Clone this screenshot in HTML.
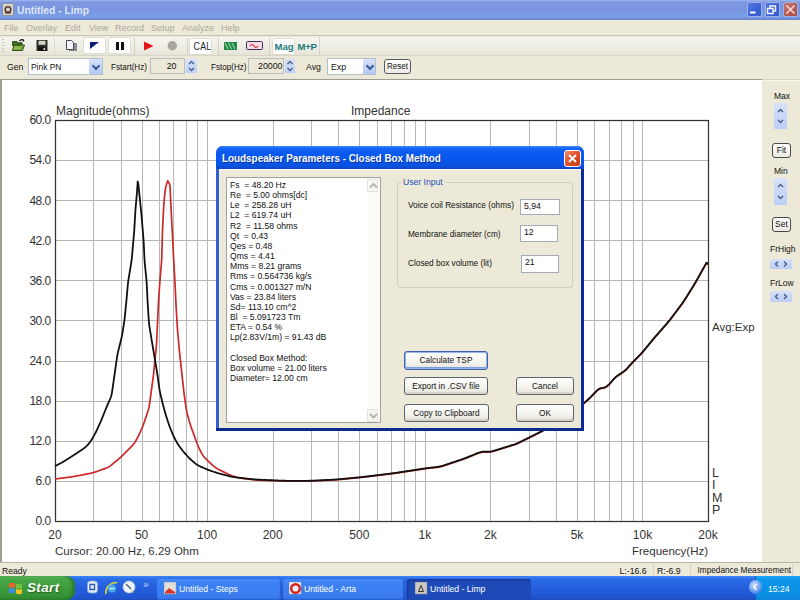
<!DOCTYPE html>
<html><head><meta charset="utf-8">
<style>
*{margin:0;padding:0;box-sizing:border-box}
html,body{width:800px;height:600px;overflow:hidden;background:#ece9d8;font-family:"Liberation Sans",sans-serif;font-size:11px;color:#000}
.a{position:absolute}
.t{position:absolute;white-space:nowrap;line-height:1}
#title{left:0;top:0;width:800px;height:20px;background:linear-gradient(#a0b8f0 0,#7d98e0 2px,#7a94df 10px,#7aa2ea 17px,#6d86cf 19px)}
#menu{left:0;top:20px;width:800px;height:16px;background:#ece9d8;border-bottom:1px solid #c8c5b6}
#menu span{position:absolute;top:3px;color:#aca899;font-size:9px}
#tb{left:0;top:37px;width:800px;height:19px;background:linear-gradient(#f5f4ee,#eeede4 60%,#e6e4d8);border-bottom:1px solid #d8d5c6}
#row2{left:0;top:56px;width:800px;height:24px;background:#ece9d8;border-bottom:1px solid #d6d3c4}
#chart{left:0;top:79px;width:762px;height:483px;background:#fff;border-left:2px solid #a09f98;border-top:1px solid #9c9b94}
#side{left:762px;top:80px;width:38px;height:482px;background:#ece9d8;border-top:1px solid #f6f5ee}
#status{left:0;top:562px;width:800px;height:14px;background:#ece9d8;border-top:1px solid #b8b5a6}
#task{left:0;top:576px;width:800px;height:24px;background:linear-gradient(#3d85f5 0,#2b6de8 3px,#245ddb 12px,#2157d4 20px,#1d4cc0 24px)}
#dlg{left:216px;top:146px;width:368px;height:285px;background:linear-gradient(90deg,#3a62d4 0,#2a56d0 3px,#0831d9 4px,#0831d9 364px,#0a2a9a 365px);border-radius:7px 7px 0 0}
.dl{font-size:8.6px;white-space:pre;color:#111}
.btn{border:1px solid #003c74;border-radius:3px;background:linear-gradient(#fefefd,#f4f3ee 60%,#e6e3d6);text-align:center;font-size:8.3px;color:#111;white-space:nowrap}
.tbb{top:2px;width:15px;height:15px;border:1px solid #9cb0ea;border-radius:2px;background:linear-gradient(135deg,#5478e0,#3c60d4 60%,#3558c8)}
.sm{font-size:8.5px;color:#111}
#st .sm{font-size:8.2px}
.combo{border:1px solid #b4bfce;background:#fff}
.ddb{background:linear-gradient(#d6e2fb,#b4c8f4);border-radius:1px}
.ddb::after{content:"";position:absolute;left:3.5px;top:4px;width:4px;height:4px;border-right:2px solid #3a5a9a;border-bottom:2px solid #3a5a9a;transform:rotate(45deg)}
.spin{background:linear-gradient(#d6e2fb,#bccdf6);border-radius:1px}
.sbtn{border:1px solid #4a4a4a;border-radius:3px;background:linear-gradient(#fff,#eceae2);font-size:8.5px;text-align:center;line-height:13px;color:#111}
.tbtn{height:21px;border-radius:3px;background:linear-gradient(#4a8cf6 0,#3c81f3 4px,#3a7cf0 16px,#3474e8 21px);box-shadow:inset -1px -1px 1px #2a60d0}
.tk{font-size:8.6px;color:#fff}
svg text{font-family:"Liberation Sans",sans-serif;font-size:12px;fill:#333}
</style></head><body>
<div id="title" class="a"></div>
<div class="a" style="left:2px;top:3px;width:12px;height:13px;background:#d8d4cc;border:1px solid #8a90a8"></div>
<svg class="a" style="left:2px;top:3px" width="12" height="13"><circle cx="6" cy="6.5" r="2.8" fill="none" stroke="#5a3030" stroke-width="1.5"/><path d="M3 10h6" stroke="#5a3030" stroke-width="1.2"/></svg>
<div class="t" style="left:17px;top:5.8px;color:#dde6f8;font-weight:bold;font-size:10.3px">Untitled - Limp</div>
<div class="a tbb" style="left:747px"></div><div class="a tbb" style="left:765px"></div><div class="a tbb" style="left:783px;background:linear-gradient(135deg,#c8766e,#b45a54 60%,#a64c48)"></div>
<svg class="a" style="left:747px;top:2px" width="51" height="15"><path d="M3 10.5h5.5" stroke="#fff" stroke-width="2"/><path d="M20.5 6.5h5.5v5h-5.5zM23 6V4h5.5v5h-2.5" stroke="#f4f6ff" stroke-width="1.4" fill="none"/><path d="M39.5 3.5L47.5 11.5M47.5 3.5L39.5 11.5" stroke="#f6d8d8" stroke-width="1.6"/></svg>
<div id="menu" class="a">
<span style="left:4px">File</span><span style="left:26px">Overlay</span><span style="left:65px">Edit</span><span style="left:89px">View</span><span style="left:115px">Record</span><span style="left:151px">Setup</span><span style="left:182px">Analyze</span><span style="left:221px">Help</span>
</div>
<div id="tb" class="a"></div>
<div class="a" style="left:2px;top:39px;width:2px;height:15px;background:repeating-linear-gradient(#c2bfae 0,#c2bfae 1px,transparent 1px,transparent 3px)"></div>
<svg class="a" style="left:0;top:36px" width="330" height="20">
<!-- open folder -->
<path d="M12.5 5.5h4.5l1 1.2h4v3h-9.5z" fill="#3f6e22" stroke="#1e3a10" stroke-width="0.8"/>
<path d="M12.5 14.5l1.5-5.5h10.5l-2 5.5z" fill="#78aa3a" stroke="#22400f" stroke-width="0.9"/>
<path d="M14 12h6" stroke="#a8d070" stroke-width="1"/>
<path d="M19.5 5q2-2.5 4.5-0.5" stroke="#111" stroke-width="1.3" fill="none"/><path d="M23 3.5l1.5 1.5l-2 0.8z" fill="#111"/>
<!-- save -->
<rect x="36.5" y="4" width="11" height="11" rx="0.5" fill="#2c2c24"/><rect x="38.5" y="4.8" width="7" height="4" fill="#d4d2c4"/><rect x="38.5" y="11" width="7" height="4" fill="#111"/><rect x="43.5" y="12" width="1.5" height="2" fill="#e0e0e0"/>
<path d="M54.5 2v17" stroke="#dcd8c8"/>
<!-- copy -->
<rect x="69" y="7" width="8" height="8" fill="#8a8a96"/><path d="M66.5 4.5h5l2 2v7h-7z" fill="#f4f2fa" stroke="#4a4a5a"/>
<!-- buttons white -->
<rect x="83.5" y="1.5" width="22" height="16" rx="2" fill="#fff" stroke="#e0ddd0"/>
<path d="M90 6h9l-9 7z" fill="#0a1f80"/>
<rect x="108.5" y="1.5" width="22" height="16" rx="2" fill="#fff" stroke="#e0ddd0"/>
<rect x="116" y="6" width="3" height="8" fill="#111"/><rect x="121" y="6" width="3" height="8" fill="#111"/>
<path d="M134.5 2v17" stroke="#d4d0c0"/>
<path d="M144 5.5l9.5 4.5l-9.5 4.5z" fill="#e8141a"/>
<circle cx="172.3" cy="9.8" r="4.7" fill="#a8a69e"/>
<path d="M187.5 2v17" stroke="#d4d0c0"/>
<rect x="189.5" y="2.5" width="22" height="16" rx="2" fill="#fff" stroke="#e0ddd0"/>
<text x="193.6" y="14.3" transform="translate(0 -2.9) scale(1 1.2)" style="font-size:8.8px;fill:#222;letter-spacing:0.2px">CAL</text>
<path d="M218.5 2v17" stroke="#d4d0c0"/>
<!-- green stripes -->
<rect x="224" y="6" width="13" height="8" fill="#1f8a48"/><path d="M225 7l3 6M228.5 7l3 6M232 7l3 6" stroke="#b6e0b8" stroke-width="1"/>
<!-- pink wave -->
<rect x="246.5" y="5.5" width="16" height="8" rx="1" fill="#f4dce6" stroke="#3a2a5a"/><path d="M250 10q2-3 4 0t4 0" stroke="#d0202a" stroke-width="1.2" fill="none"/>
<path d="M269.5 2v17" stroke="#d4d0c0"/>
<rect x="272.5" y="2.5" width="22" height="16" rx="2" fill="#fff" stroke="#e0ddd0"/>
<text x="274.5" y="13.5" style="font-size:9.6px;font-weight:bold;fill:#1a7a7a">Mag</text>
<text x="297.5" y="13.5" style="font-size:9.6px;font-weight:bold;fill:#1a7a7a;letter-spacing:-0.3px">M+P</text>
<path d="M319.5 1v18" stroke="#d8d5c6"/>
</svg>
<div id="row2" class="a"></div>
<div class="t sm" style="left:7px;top:63px;font-size:8.7px">Gen</div>
<div class="a combo" style="left:28px;top:58px;width:75px;height:17px"></div>
<div class="t sm" style="left:31px;top:63px;font-size:8.7px;transform:scaleX(0.97);transform-origin:0 0">Pink PN</div>
<div class="a ddb" style="left:89px;top:59px;width:13px;height:15px"></div>
<div class="t sm" style="left:111px;top:63px;font-size:8.7px;transform:scaleX(0.93);transform-origin:0 0">Fstart(Hz)</div>
<div class="a" style="left:150px;top:58px;width:35px;height:16px;border:1px solid #b8bcc0;background:#ece9d8"></div>
<div class="t sm" style="left:150px;top:62.3px;width:26.5px;text-align:right;font-size:8.8px">20</div>
<div class="a spin" style="left:186px;top:59px;width:11px;height:14px"></div><svg class="a" style="left:186px;top:59px" width="11" height="14"><path d="M3 5l2.5-2.5L8 5M3 9l2.5 2.5L8 9" stroke="#4d6185" stroke-width="1.4" fill="none"/></svg>
<div class="t sm" style="left:211px;top:63px;font-size:8.7px;transform:scaleX(0.93);transform-origin:0 0">Fstop(Hz)</div>
<div class="a" style="left:248px;top:58px;width:36px;height:16px;border:1px solid #b8bcc0;background:#ece9d8"></div>
<div class="t sm" style="left:248px;top:62.3px;width:34.5px;text-align:right;font-size:8.8px">20000</div>
<div class="a spin" style="left:285px;top:59px;width:10px;height:14px"></div><svg class="a" style="left:285px;top:59px" width="10" height="14"><path d="M2.5 5L5 2.5L7.5 5M2.5 9L5 11.5L7.5 9" stroke="#4d6185" stroke-width="1.4" fill="none"/></svg>
<div class="t sm" style="left:306px;top:63.2px;font-size:8.7px">Avg</div>
<div class="a combo" style="left:327px;top:58px;width:49px;height:17px"></div>
<div class="t sm" style="left:331px;top:63.2px;font-size:8.7px">Exp</div>
<div class="a ddb" style="left:363px;top:59px;width:12px;height:15px"></div>
<div class="a" style="left:384px;top:59px;width:27px;height:15px;border:1px solid #5a5a5a;border-radius:3px;background:linear-gradient(#fff,#ecebe6)"></div>
<div class="t sm" style="left:386.5px;top:62px;font-size:8.9px;transform:scaleX(0.9);transform-origin:0 0">Reset</div>
<div id="chart" class="a"></div>
<svg class="a" style="left:0;top:0" width="800" height="600">
<path d="M93.5 120V521M121.5 120V521M142.5 120V521M159.5 120V521M173.5 120V521M186.5 120V521M197.5 120V521M207.5 120V521M273.5 120V521M311.5 120V521M338.5 120V521M359.5 120V521M377.5 120V521M391.5 120V521M404.5 120V521M415.5 120V521M425.5 120V521M490.5 120V521M529.5 120V521M556.5 120V521M577.5 120V521M594.5 120V521M609.5 120V521M621.5 120V521M633.5 120V521M642.5 120V521M55 160.5H708M55 200.5H708M55 240.5H708M55 280.5H708M55 320.5H708M55 361.5H708M55 401.5H708M55 441.5H708M55 481.5H708" stroke="#b6b6b6" stroke-width="1" fill="none"/>
<rect x="55.5" y="120.5" width="653" height="401" stroke="#333" stroke-width="1.25" fill="none"/>
<path d="M55.00 479.00 L55.69 478.91 L56.39 478.83 L57.08 478.74 L57.78 478.65 L58.47 478.56 L59.17 478.48 L59.86 478.39 L60.56 478.30 L61.25 478.21 L61.95 478.13 L62.65 478.04 L63.34 477.95 L64.03 477.86 L64.72 477.78 L65.42 477.69 L66.11 477.60 L66.81 477.52 L67.50 477.43 L68.20 477.34 L68.89 477.25 L69.58 477.16 L70.28 477.06 L70.97 476.97 L71.66 476.86 L72.35 476.76 L73.04 476.65 L73.73 476.53 L74.42 476.41 L75.11 476.29 L75.80 476.16 L76.49 476.03 L77.18 475.90 L77.86 475.77 L78.55 475.64 L79.24 475.51 L79.93 475.37 L80.61 475.24 L81.30 475.11 L81.99 474.98 L82.68 474.84 L83.36 474.71 L84.05 474.58 L84.74 474.45 L85.43 474.32 L86.11 474.18 L86.80 474.05 L87.49 473.92 L88.17 473.78 L88.86 473.65 L89.55 473.51 L90.23 473.36 L90.91 473.21 L91.59 473.05 L92.27 472.88 L92.94 472.70 L93.62 472.51 L94.28 472.31 L94.95 472.10 L95.61 471.88 L96.28 471.66 L96.94 471.43 L97.60 471.20 L98.26 470.96 L98.92 470.73 L99.58 470.50 L100.24 470.26 L100.90 470.03 L101.56 469.80 L102.22 469.56 L102.88 469.33 L103.53 469.09 L104.19 468.85 L104.85 468.61 L105.50 468.36 L106.14 468.10 L106.78 467.83 L107.41 467.53 L108.02 467.22 L108.62 466.89 L109.21 466.53 L109.79 466.15 L110.36 465.75 L110.91 465.33 L111.46 464.91 L112.01 464.47 L112.56 464.03 L113.10 463.59 L113.64 463.15 L114.18 462.70 L114.72 462.26 L115.26 461.81 L115.80 461.37 L116.34 460.92 L116.88 460.48 L117.42 460.03 L117.95 459.58 L118.49 459.13 L119.02 458.68 L119.55 458.22 L120.07 457.75 L120.59 457.29 L121.11 456.81 L121.61 456.33 L122.12 455.85 L122.62 455.36 L123.12 454.87 L123.62 454.38 L124.11 453.88 L124.61 453.39 L125.10 452.90 L125.60 452.40 L126.09 451.91 L126.59 451.41 L127.08 450.92 L127.58 450.42 L128.07 449.93 L128.57 449.43 L129.06 448.94 L129.56 448.44 L130.05 447.94 L130.54 447.45 L131.03 446.95 L131.52 446.45 L132.00 445.94 L132.47 445.42 L132.92 444.90 L133.37 444.37 L133.79 443.82 L134.20 443.26 L134.59 442.69 L134.97 442.10 L135.33 441.51 L135.69 440.91 L136.04 440.30 L136.38 439.69 L136.72 439.08 L137.06 438.47 L137.40 437.86 L137.73 437.24 L138.06 436.63 L138.39 436.01 L138.71 435.38 L139.02 434.76 L139.33 434.13 L139.63 433.50 L139.93 432.87 L140.22 432.23 L140.51 431.59 L140.79 430.95 L141.08 430.32 L141.36 429.68 L141.64 429.03 L141.92 428.39 L142.19 427.75 L142.46 427.10 L142.72 426.45 L142.97 425.80 L143.22 425.15 L143.46 424.49 L143.70 423.83 L143.93 423.17 L144.16 422.51 L144.38 421.85 L144.60 421.18 L144.83 420.52 L145.05 419.86 L145.27 419.19 L145.49 418.53 L145.71 417.86 L145.93 417.20 L146.15 416.54 L146.38 415.87 L146.60 415.21 L146.82 414.54 L147.04 413.88 L147.26 413.22 L147.48 412.55 L147.69 411.89 L147.91 411.22 L148.11 410.55 L148.31 409.88 L148.50 409.21 L148.68 408.54 L148.84 407.86 L148.99 407.18 L149.13 406.49 L149.25 405.81 L149.36 405.12 L149.47 404.43 L149.57 403.74 L149.67 403.04 L149.77 402.35 L149.86 401.66 L149.96 400.96 L150.05 400.27 L150.15 399.58 L150.24 398.88 L150.34 398.19 L150.43 397.50 L150.53 396.80 L150.62 396.11 L150.72 395.41 L150.81 394.72 L150.91 394.03 L151.00 393.33 L151.09 392.64 L151.19 391.95 L151.28 391.25 L151.38 390.56 L151.47 389.87 L151.57 389.17 L151.66 388.48 L151.76 387.79 L151.85 387.09 L151.95 386.40 L152.04 385.70 L152.13 385.01 L152.23 384.32 L152.32 383.62 L152.42 382.93 L152.51 382.24 L152.61 381.54 L152.70 380.85 L152.80 380.16 L152.89 379.46 L152.98 378.77 L153.08 378.07 L153.17 377.38 L153.26 376.69 L153.34 375.99 L153.43 375.30 L153.51 374.60 L153.59 373.91 L153.67 373.21 L153.74 372.51 L153.81 371.82 L153.89 371.12 L153.96 370.43 L154.03 369.73 L154.10 369.03 L154.17 368.34 L154.24 367.64 L154.31 366.94 L154.38 366.25 L154.44 365.55 L154.51 364.85 L154.58 364.16 L154.65 363.46 L154.72 362.76 L154.79 362.07 L154.86 361.37 L154.93 360.67 L155.00 359.98 L155.07 359.28 L155.14 358.59 L155.21 357.89 L155.28 357.19 L155.35 356.50 L155.42 355.80 L155.49 355.10 L155.56 354.41 L155.63 353.71 L155.70 353.01 L155.77 352.32 L155.84 351.62 L155.91 350.92 L155.98 350.23 L156.05 349.53 L156.11 348.83 L156.18 348.14 L156.24 347.44 L156.31 346.74 L156.37 346.05 L156.42 345.35 L156.47 344.65 L156.52 343.95 L156.56 343.25 L156.60 342.55 L156.64 341.86 L156.68 341.16 L156.71 340.46 L156.74 339.76 L156.78 339.06 L156.81 338.36 L156.84 337.66 L156.88 336.96 L156.91 336.26 L156.94 335.56 L156.97 334.86 L157.01 334.16 L157.04 333.47 L157.07 332.77 L157.10 332.07 L157.14 331.37 L157.17 330.67 L157.20 329.97 L157.23 329.27 L157.27 328.57 L157.30 327.87 L157.33 327.17 L157.36 326.47 L157.40 325.77 L157.43 325.07 L157.46 324.38 L157.50 323.68 L157.53 322.98 L157.56 322.28 L157.59 321.58 L157.63 320.88 L157.66 320.18 L157.69 319.48 L157.72 318.78 L157.76 318.08 L157.79 317.38 L157.82 316.68 L157.85 315.98 L157.89 315.29 L157.92 314.59 L157.95 313.89 L157.98 313.19 L158.02 312.49 L158.05 311.79 L158.08 311.09 L158.12 310.39 L158.15 309.69 L158.18 308.99 L158.21 308.29 L158.25 307.59 L158.28 306.89 L158.31 306.20 L158.34 305.50 L158.38 304.80 L158.41 304.10 L158.44 303.40 L158.48 302.70 L158.51 302.00 L158.55 301.30 L158.59 300.60 L158.63 299.90 L158.67 299.20 L158.71 298.51 L158.76 297.81 L158.80 297.11 L158.85 296.41 L158.89 295.71 L158.94 295.01 L158.99 294.32 L159.04 293.62 L159.09 292.92 L159.13 292.22 L159.18 291.52 L159.23 290.82 L159.28 290.13 L159.33 289.43 L159.37 288.73 L159.42 288.03 L159.47 287.33 L159.52 286.63 L159.57 285.94 L159.62 285.24 L159.66 284.54 L159.72 283.84 L159.77 283.14 L159.82 282.44 L159.87 281.75 L159.93 281.05 L159.99 280.35 L160.04 279.65 L160.10 278.96 L160.16 278.26 L160.22 277.56 L160.28 276.86 L160.33 276.17 L160.39 275.47 L160.45 274.77 L160.51 274.07 L160.57 273.38 L160.63 272.68 L160.69 271.98 L160.75 271.28 L160.81 270.59 L160.87 269.89 L160.92 269.19 L160.98 268.49 L161.04 267.80 L161.10 267.10 L161.16 266.40 L161.22 265.70 L161.28 265.01 L161.33 264.31 L161.39 263.61 L161.45 262.91 L161.50 262.21 L161.55 261.52 L161.59 260.82 L161.64 260.12 L161.67 259.42 L161.71 258.72 L161.74 258.02 L161.76 257.32 L161.78 256.62 L161.81 255.92 L161.83 255.22 L161.85 254.53 L161.86 253.83 L161.88 253.13 L161.90 252.43 L161.92 251.73 L161.94 251.03 L161.96 250.33 L161.98 249.63 L162.00 248.93 L162.01 248.23 L162.03 247.53 L162.05 246.83 L162.07 246.13 L162.09 245.43 L162.11 244.73 L162.13 244.03 L162.14 243.33 L162.16 242.63 L162.18 241.93 L162.20 241.23 L162.22 240.53 L162.24 239.83 L162.26 239.13 L162.28 238.43 L162.29 237.73 L162.31 237.03 L162.33 236.33 L162.35 235.63 L162.37 234.93 L162.39 234.23 L162.41 233.53 L162.43 232.83 L162.45 232.13 L162.47 231.43 L162.50 230.73 L162.52 230.03 L162.55 229.34 L162.58 228.64 L162.62 227.94 L162.65 227.24 L162.68 226.54 L162.72 225.84 L162.76 225.14 L162.79 224.44 L162.83 223.74 L162.87 223.04 L162.90 222.34 L162.94 221.65 L162.98 220.95 L163.01 220.25 L163.05 219.55 L163.09 218.85 L163.12 218.15 L163.16 217.45 L163.20 216.75 L163.23 216.05 L163.27 215.35 L163.31 214.66 L163.34 213.96 L163.38 213.26 L163.42 212.56 L163.45 211.86 L163.49 211.16 L163.53 210.46 L163.57 209.76 L163.60 209.06 L163.64 208.36 L163.68 207.66 L163.71 206.97 L163.75 206.27 L163.79 205.57 L163.83 204.87 L163.87 204.17 L163.91 203.47 L163.96 202.77 L164.01 202.08 L164.06 201.38 L164.12 200.68 L164.18 199.98 L164.25 199.29 L164.33 198.59 L164.40 197.90 L164.48 197.20 L164.56 196.50 L164.63 195.81 L164.71 195.11 L164.79 194.42 L164.86 193.72 L164.94 193.03 L165.02 192.33 L165.10 191.63 L165.17 190.94 L165.25 190.24 L165.33 189.55 L165.42 188.85 L165.52 188.16 L165.67 187.48 L165.85 186.81 L166.05 186.13 L166.24 185.46 L166.44 184.79 L166.64 184.12 L166.84 183.45 L167.03 182.78 L167.23 182.10 L167.43 181.43 L167.63 180.87 L167.90 180.95 L168.21 181.50 L168.53 182.13 L168.85 182.75 L169.17 183.37 L169.49 184.00 L169.78 184.63 L169.97 185.29 L170.04 185.97 L170.07 186.67 L170.10 187.37 L170.13 188.07 L170.16 188.77 L170.19 189.47 L170.22 190.17 L170.25 190.87 L170.28 191.57 L170.31 192.27 L170.34 192.97 L170.37 193.67 L170.40 194.37 L170.43 195.06 L170.46 195.76 L170.49 196.46 L170.52 197.16 L170.55 197.86 L170.58 198.56 L170.61 199.26 L170.64 199.96 L170.67 200.66 L170.70 201.36 L170.74 202.06 L170.77 202.76 L170.81 203.46 L170.84 204.16 L170.88 204.85 L170.91 205.55 L170.95 206.25 L170.99 206.95 L171.02 207.65 L171.06 208.35 L171.10 209.05 L171.13 209.75 L171.17 210.45 L171.21 211.15 L171.24 211.84 L171.28 212.54 L171.32 213.24 L171.35 213.94 L171.39 214.64 L171.43 215.34 L171.47 216.04 L171.50 216.74 L171.54 217.44 L171.58 218.14 L171.61 218.84 L171.65 219.53 L171.69 220.23 L171.72 220.93 L171.76 221.63 L171.80 222.33 L171.83 223.03 L171.87 223.73 L171.91 224.43 L171.94 225.13 L171.98 225.83 L172.02 226.52 L172.05 227.22 L172.09 227.92 L172.13 228.62 L172.16 229.32 L172.20 230.02 L172.23 230.72 L172.27 231.42 L172.31 232.12 L172.34 232.82 L172.38 233.52 L172.41 234.21 L172.45 234.91 L172.48 235.61 L172.52 236.31 L172.55 237.01 L172.59 237.71 L172.62 238.41 L172.66 239.11 L172.69 239.81 L172.73 240.51 L172.76 241.21 L172.80 241.90 L172.83 242.60 L172.87 243.30 L172.90 244.00 L172.94 244.70 L172.97 245.40 L173.00 246.10 L173.04 246.80 L173.07 247.50 L173.11 248.20 L173.14 248.90 L173.18 249.60 L173.21 250.29 L173.25 250.99 L173.28 251.69 L173.32 252.39 L173.35 253.09 L173.39 253.79 L173.42 254.49 L173.46 255.19 L173.49 255.89 L173.53 256.59 L173.57 257.29 L173.60 257.98 L173.64 258.68 L173.67 259.38 L173.71 260.08 L173.75 260.78 L173.79 261.48 L173.83 262.18 L173.87 262.88 L173.91 263.58 L173.95 264.28 L173.99 264.97 L174.03 265.67 L174.07 266.37 L174.11 267.07 L174.15 267.77 L174.19 268.47 L174.23 269.17 L174.27 269.87 L174.31 270.56 L174.35 271.26 L174.39 271.96 L174.43 272.66 L174.47 273.36 L174.51 274.06 L174.55 274.76 L174.59 275.46 L174.63 276.16 L174.67 276.85 L174.71 277.55 L174.75 278.25 L174.79 278.95 L174.83 279.65 L174.87 280.35 L174.91 281.05 L174.95 281.75 L174.98 282.45 L175.02 283.14 L175.05 283.84 L175.09 284.54 L175.12 285.24 L175.15 285.94 L175.18 286.64 L175.21 287.34 L175.25 288.04 L175.28 288.74 L175.31 289.44 L175.34 290.14 L175.37 290.84 L175.40 291.54 L175.43 292.24 L175.46 292.93 L175.49 293.63 L175.53 294.33 L175.56 295.03 L175.59 295.73 L175.62 296.43 L175.65 297.13 L175.68 297.83 L175.71 298.53 L175.74 299.23 L175.77 299.93 L175.81 300.63 L175.84 301.33 L175.87 302.03 L175.90 302.72 L175.94 303.42 L175.97 304.12 L176.01 304.82 L176.04 305.52 L176.08 306.22 L176.12 306.92 L176.16 307.62 L176.20 308.32 L176.24 309.02 L176.28 309.71 L176.32 310.41 L176.37 311.11 L176.41 311.81 L176.45 312.51 L176.49 313.21 L176.53 313.91 L176.58 314.61 L176.62 315.30 L176.66 316.00 L176.70 316.70 L176.74 317.40 L176.79 318.10 L176.83 318.80 L176.87 319.50 L176.91 320.20 L176.95 320.89 L177.00 321.59 L177.04 322.29 L177.08 322.99 L177.12 323.69 L177.16 324.39 L177.21 325.09 L177.25 325.78 L177.29 326.48 L177.34 327.18 L177.38 327.88 L177.43 328.58 L177.48 329.28 L177.53 329.98 L177.58 330.67 L177.64 331.37 L177.70 332.07 L177.76 332.77 L177.82 333.46 L177.88 334.16 L177.94 334.86 L178.01 335.55 L178.07 336.25 L178.13 336.95 L178.20 337.65 L178.26 338.34 L178.32 339.04 L178.39 339.74 L178.45 340.43 L178.51 341.13 L178.58 341.83 L178.64 342.53 L178.70 343.22 L178.77 343.92 L178.83 344.62 L178.89 345.31 L178.96 346.01 L179.02 346.71 L179.08 347.41 L179.15 348.10 L179.21 348.80 L179.28 349.50 L179.34 350.19 L179.41 350.89 L179.48 351.59 L179.55 352.28 L179.62 352.98 L179.69 353.68 L179.76 354.37 L179.84 355.07 L179.91 355.76 L179.99 356.46 L180.06 357.16 L180.14 357.85 L180.21 358.55 L180.29 359.24 L180.36 359.94 L180.44 360.64 L180.51 361.33 L180.59 362.03 L180.67 362.72 L180.74 363.42 L180.82 364.12 L180.89 364.81 L180.97 365.51 L181.04 366.20 L181.12 366.90 L181.20 367.59 L181.27 368.29 L181.35 368.99 L181.42 369.68 L181.50 370.38 L181.57 371.07 L181.65 371.77 L181.73 372.47 L181.80 373.16 L181.88 373.86 L181.95 374.55 L182.03 375.25 L182.11 375.95 L182.18 376.64 L182.26 377.34 L182.34 378.03 L182.41 378.73 L182.49 379.42 L182.57 380.12 L182.65 380.82 L182.72 381.51 L182.80 382.21 L182.88 382.90 L182.96 383.60 L183.03 384.29 L183.11 384.99 L183.19 385.69 L183.26 386.38 L183.34 387.08 L183.42 387.77 L183.50 388.47 L183.58 389.16 L183.65 389.86 L183.73 390.55 L183.82 391.25 L183.90 391.95 L183.98 392.64 L184.07 393.33 L184.16 394.03 L184.25 394.72 L184.34 395.42 L184.44 396.11 L184.53 396.80 L184.63 397.50 L184.72 398.19 L184.82 398.88 L184.91 399.58 L185.01 400.27 L185.11 400.96 L185.20 401.66 L185.30 402.35 L185.40 403.04 L185.49 403.74 L185.59 404.43 L185.68 405.12 L185.78 405.82 L185.88 406.51 L185.98 407.20 L186.08 407.89 L186.19 408.59 L186.31 409.28 L186.43 409.96 L186.56 410.65 L186.70 411.33 L186.85 412.02 L187.00 412.70 L187.17 413.38 L187.34 414.06 L187.51 414.73 L187.69 415.41 L187.87 416.09 L188.05 416.76 L188.23 417.44 L188.42 418.11 L188.60 418.79 L188.78 419.47 L188.97 420.14 L189.15 420.82 L189.34 421.49 L189.53 422.16 L189.73 422.83 L189.93 423.50 L190.14 424.17 L190.36 424.83 L190.58 425.50 L190.81 426.16 L191.04 426.82 L191.27 427.48 L191.51 428.14 L191.75 428.80 L191.98 429.46 L192.22 430.11 L192.46 430.77 L192.70 431.43 L192.94 432.09 L193.18 432.74 L193.42 433.40 L193.66 434.06 L193.90 434.72 L194.14 435.38 L194.38 436.03 L194.62 436.69 L194.85 437.35 L195.09 438.01 L195.33 438.67 L195.57 439.32 L195.81 439.98 L196.05 440.64 L196.29 441.30 L196.53 441.95 L196.78 442.61 L197.02 443.26 L197.27 443.92 L197.53 444.57 L197.79 445.21 L198.06 445.86 L198.34 446.50 L198.63 447.14 L198.92 447.77 L199.22 448.40 L199.53 449.03 L199.84 449.66 L200.15 450.29 L200.46 450.91 L200.78 451.54 L201.10 452.16 L201.42 452.78 L201.75 453.39 L202.09 454.00 L202.45 454.59 L202.82 455.17 L203.21 455.74 L203.63 456.29 L204.06 456.83 L204.51 457.36 L204.98 457.87 L205.46 458.38 L205.94 458.88 L206.44 459.37 L206.93 459.87 L207.43 460.36 L207.93 460.85 L208.43 461.34 L208.93 461.83 L209.44 462.31 L209.94 462.79 L210.45 463.28 L210.96 463.75 L211.47 464.23 L211.99 464.70 L212.51 465.17 L213.04 465.63 L213.57 466.07 L214.11 466.51 L214.66 466.93 L215.23 467.33 L215.80 467.72 L216.39 468.09 L216.99 468.45 L217.59 468.79 L218.21 469.13 L218.82 469.46 L219.44 469.78 L220.06 470.10 L220.68 470.42 L221.31 470.74 L221.93 471.06 L222.56 471.37 L223.18 471.69 L223.81 472.00 L224.43 472.32 L225.06 472.63 L225.69 472.94 L226.31 473.25 L226.94 473.56 L227.57 473.86 L228.20 474.16 L228.84 474.45 L229.48 474.73 L230.12 475.00 L230.77 475.26 L231.42 475.51 L232.08 475.75 L232.74 475.98 L233.40 476.20 L234.07 476.42 L234.73 476.63 L235.40 476.84 L236.07 477.04 L236.74 477.24 L237.41 477.42 L238.09 477.60 L238.77 477.76 L239.45 477.91 L240.13 478.04 L240.82 478.16 L241.51 478.28 L242.20 478.38 L242.89 478.47 L243.58 478.57 L244.28 478.66 L244.97 478.75 L245.67 478.83 L246.36 478.92 L247.06 479.01 L247.75 479.09 L248.44 479.18 L249.14 479.27 L249.83 479.35 L250.53 479.44 L251.22 479.52 L251.92 479.60 L252.61 479.68 L253.31 479.76 L254.01 479.83 L254.70 479.89 L255.40 479.95 L256.10 480.00 L256.79 480.04 L257.49 480.08 L258.19 480.11 L258.89 480.15 L259.59 480.18 L260.29 480.20 L260.99 480.23 L261.69 480.26 L262.39 480.29 L263.09 480.32 L263.79 480.34 L264.49 480.37 L265.19 480.40 L265.89 480.42 L266.58 480.45 L267.28 480.48 L267.98 480.51 L268.68 480.53 L269.38 480.56 L270.08 480.59 L270.78 480.62 L271.48 480.64 L272.18 480.67 L272.88 480.70 L273.58 480.72 L274.28 480.75 L274.98 480.78 L275.68 480.81 L276.38 480.83 L277.08 480.86 L277.78 480.89 L278.48 480.91 L279.18 480.94 L279.87 480.97 L280.57 480.99 L281.27 481.02 L281.97 481.04 L282.67 481.07 L283.37 481.09 L284.07 481.10 L284.77 481.12 L285.47 481.13 L286.17 481.14 L286.87 481.14 L287.57 481.14 L288.27 481.15 L288.97 481.15 L289.67 481.15 L290.37 481.15 L291.07 481.15 L291.77 481.15 L292.47 481.15 L293.17 481.15 L293.87 481.15 L294.57 481.15 L295.27 481.15 L295.97 481.15 L296.67 481.15 L297.37 481.15 L298.07 481.15 L298.77 481.15 L299.47 481.15 L300.17 481.15 L300.87 481.15 L301.57 481.15 L302.27 481.15 L302.97 481.15 L303.67 481.15 L304.37 481.15 L305.07 481.15 L305.77 481.15 L306.47 481.15 L307.17 481.14 L307.87 481.14 L308.57 481.13 L309.27 481.12 L309.97 481.11 L310.67 481.10 L311.37 481.08 L312.07 481.05 L312.77 481.02 L313.47 480.99 L314.17 480.96 L314.87 480.93 L315.56 480.90 L316.26 480.86 L316.96 480.83 L317.66 480.79 L318.36 480.76 L319.06 480.72 L319.76 480.69 L320.46 480.65 L321.16 480.62 L321.86 480.58 L322.56 480.55 L323.26 480.51 L323.95 480.48 L324.65 480.44 L325.35 480.41 L326.05 480.37 L326.75 480.34 L327.45 480.30 L328.15 480.27 L328.85 480.23 L329.55 480.20 L330.25 480.16 L330.95 480.13 L331.64 480.09 L332.34 480.06 L333.04 480.02 L333.74 479.98 L334.44 479.94 L335.14 479.90 L335.84 479.85 L336.54 479.80 L337.23 479.75 L337.93 479.69 L338.63 479.63 L339.32 479.57 L340.02 479.51 L340.72 479.44 L341.42 479.38 L342.11 479.31 L342.81 479.24 L343.51 479.18 L344.20 479.11 L344.90 479.04 L345.60 478.98 L346.29 478.91 L346.99 478.84 L347.69 478.77 L348.38 478.71 L349.08 478.64 L349.78 478.57 L350.47 478.51 L351.17 478.44 L351.87 478.37 L352.56 478.31 L353.26 478.24 L353.96 478.17 L354.65 478.10 L355.35 478.04 L356.05 477.97 L356.75 477.90 L357.44 477.84 L358.14 477.77 L358.84 477.70 L359.53 477.63 L360.23 477.56 L360.92 477.49 L361.62 477.42 L362.32 477.34 L363.01 477.27 L363.71 477.19 L364.40 477.11 L365.10 477.03 L365.79 476.94 L366.49 476.86 L367.18 476.77 L367.88 476.69 L368.57 476.60 L369.27 476.52 L369.96 476.43 L370.66 476.35 L371.35 476.26 L372.05 476.18 L372.74 476.09 L373.44 476.00 L374.13 475.92 L374.83 475.83 L375.52 475.75 L376.22 475.66 L376.91 475.58 L377.60 475.49 L378.30 475.41 L378.99 475.32 L379.69 475.23 L380.38 475.15 L381.08 475.06 L381.77 474.98 L382.47 474.89 L383.16 474.81 L383.86 474.72 L384.55 474.64 L385.25 474.55 L385.94 474.46 L386.64 474.38 L387.33 474.29 L388.03 474.21 L388.72 474.12 L389.42 474.04 L390.11 473.95 L390.80 473.86 L391.50 473.78 L392.19 473.69 L392.89 473.60 L393.58 473.51 L394.28 473.42 L394.97 473.32 L395.66 473.23 L396.36 473.13 L397.05 473.03 L397.74 472.92 L398.43 472.82 L399.12 472.71 L399.82 472.61 L400.51 472.50 L401.20 472.40 L401.89 472.29 L402.58 472.18 L403.28 472.08 L403.97 471.97 L404.66 471.86 L405.35 471.76 L406.04 471.65 L406.74 471.54 L407.43 471.44 L408.12 471.33 L408.81 471.23 L409.50 471.12 L410.19 471.01 L410.89 470.91 L411.58 470.80 L412.27 470.69 L412.96 470.59 L413.65 470.48 L414.35 470.37 L415.04 470.27 L415.73 470.16 L416.42 470.05 L417.11 469.95 L417.81 469.84 L418.50 469.74 L419.19 469.63 L419.88 469.52 L420.57 469.42 L421.26 469.31 L421.96 469.20 L422.65 469.10 L423.34 468.99 L424.03 468.89 L424.72 468.78 L425.42 468.68 L426.11 468.59 L426.80 468.49 L427.50 468.40 L428.19 468.31 L428.89 468.23 L429.58 468.15 L430.28 468.07 L430.97 467.99 L431.67 467.92 L432.36 467.85 L433.06 467.77 L433.76 467.70 L434.45 467.62 L435.15 467.55 L435.84 467.47 L436.54 467.39 L437.23 467.30 L437.92 467.20 L438.61 467.10 L439.30 466.97 L439.98 466.83 L440.65 466.68 L441.33 466.50 L442.00 466.32 L442.67 466.12 L443.34 465.91 L444.00 465.70 L444.67 465.48 L445.33 465.26 L446.00 465.04 L446.66 464.82 L447.32 464.60 L447.99 464.38 L448.65 464.15 L449.32 463.93 L449.98 463.71 L450.64 463.49 L451.31 463.26 L451.97 463.04 L452.63 462.82 L453.30 462.60 L453.96 462.38 L454.63 462.15 L455.29 461.93 L455.95 461.71 L456.62 461.49 L457.28 461.26 L457.94 461.04 L458.61 460.82 L459.27 460.59 L459.93 460.37 L460.60 460.14 L461.26 459.91 L461.92 459.68 L462.58 459.44 L463.23 459.20 L463.89 458.96 L464.54 458.71 L465.19 458.46 L465.85 458.20 L466.50 457.95 L467.15 457.69 L467.80 457.43 L468.45 457.17 L469.10 456.91 L469.75 456.65 L470.40 456.39 L471.05 456.13 L471.70 455.87 L472.35 455.61 L473.00 455.35 L473.65 455.09 L474.30 454.83 L474.95 454.57 L475.60 454.31 L476.25 454.05 L476.90 453.80 L477.55 453.54 L478.20 453.29 L478.85 453.06 L479.51 452.83 L480.17 452.62 L480.83 452.44 L481.50 452.30 L482.17 452.18 L482.85 452.10 L483.53 452.05 L484.22 452.03 L484.91 452.03 L485.60 452.04 L486.29 452.06 L486.99 452.08 L487.68 452.09 L488.37 452.09 L489.06 452.06 L489.75 452.00 L490.43 451.92 L491.11 451.81 L491.78 451.67 L492.46 451.51 L493.13 451.33 L493.80 451.15 L494.47 450.95 L495.14 450.75 L495.81 450.54 L496.48 450.34 L497.15 450.13 L497.81 449.92 L498.48 449.71 L499.15 449.51 L499.82 449.30 L500.49 449.09 L501.16 448.88 L501.82 448.67 L502.49 448.47 L503.16 448.26 L503.83 448.05 L504.50 447.84 L505.17 447.64 L505.84 447.43 L506.50 447.22 L507.17 447.01 L507.84 446.80 L508.51 446.60 L509.18 446.39 L509.85 446.18 L510.51 445.97 L511.18 445.76 L511.85 445.55 L512.52 445.34 L513.18 445.13 L513.85 444.91 L514.51 444.69 L515.17 444.46 L515.82 444.22 L516.48 443.97 L517.12 443.70 L517.76 443.43 L518.40 443.15 L519.04 442.85 L519.67 442.55 L520.30 442.25 L520.93 441.94 L521.55 441.63 L522.18 441.32 L522.81 441.01 L523.43 440.70 L524.06 440.38 L524.69 440.07 L525.31 439.76 L525.94 439.45 L526.57 439.14 L527.19 438.82 L527.82 438.51 L528.45 438.20 L529.07 437.89 L529.70 437.57 L530.33 437.26 L530.95 436.95 L531.58 436.64 L532.21 436.33 L532.83 436.01 L533.46 435.70 L534.08 435.39 L534.71 435.08 L535.34 434.77 L535.96 434.45 L536.59 434.14 L537.22 433.83 L537.84 433.52 L538.47 433.20 L539.10 432.89 L539.72 432.58 L540.35 432.26 L540.97 431.94 L541.59 431.62 L542.20 431.29 L542.82 430.95 L543.42 430.61 L544.03 430.25 L544.62 429.89 L545.22 429.52 L545.81 429.15 L546.39 428.76 L546.98 428.38 L547.56 427.99 L548.15 427.61 L548.73 427.22 L549.31 426.83 L549.89 426.44 L550.47 426.05 L551.05 425.66 L551.64 425.27 L552.22 424.88 L552.80 424.49 L553.38 424.10 L553.96 423.72 L554.55 423.33 L555.13 422.94 L555.71 422.55 L556.29 422.16 L556.87 421.77 L557.45 421.38 L558.04 420.99 L558.62 420.60 L559.20 420.21 L559.78 419.82 L560.36 419.43 L560.94 419.04 L561.53 418.65 L562.11 418.27 L562.69 417.88 L563.27 417.49 L563.85 417.10 L564.44 416.71 L565.02 416.32 L565.60 415.93 L566.18 415.54 L566.76 415.15 L567.34 414.76 L567.93 414.37 L568.51 413.98 L569.09 413.59 L569.67 413.20 L570.25 412.82 L570.83 412.43 L571.42 412.04 L572.00 411.65 L572.58 411.26 L573.16 410.87 L573.74 410.48 L574.33 410.09 L574.91 409.70 L575.49 409.31 L576.07 408.92 L576.65 408.53 L577.23 408.14 L577.82 407.75 L578.40 407.36 L578.98 406.97 L579.56 406.58 L580.14 406.19 L580.72 405.80 L581.29 405.40 L581.87 405.00 L582.43 404.59 L582.99 404.18 L583.55 403.75 L584.09 403.32 L584.63 402.88 L585.17 402.43 L585.70 401.97 L586.22 401.50 L586.74 401.03 L587.25 400.56 L587.77 400.09 L588.28 399.61 L588.79 399.13 L589.29 398.64 L589.79 398.16 L590.29 397.67 L590.79 397.17 L591.28 396.67 L591.76 396.17 L592.25 395.67 L592.74 395.16 L593.22 394.66 L593.70 394.15 L594.18 393.64 L594.67 393.14 L595.15 392.63 L595.63 392.13 L596.12 391.63 L596.61 391.15 L597.11 390.68 L597.62 390.24 L598.14 389.83 L598.69 389.46 L599.25 389.14 L599.84 388.88 L600.45 388.66 L601.07 388.50 L601.72 388.36 L602.37 388.24 L603.02 388.12 L603.67 387.99 L604.30 387.82 L604.92 387.61 L605.52 387.34 L606.10 387.03 L606.66 386.67 L607.20 386.27 L607.72 385.84 L608.24 385.38 L608.73 384.90 L609.22 384.41 L609.70 383.91 L610.18 383.39 L610.64 382.87 L611.11 382.35 L611.57 381.82 L612.03 381.30 L612.49 380.77 L612.95 380.25 L613.42 379.73 L613.89 379.21 L614.37 378.71 L614.86 378.22 L615.36 377.74 L615.88 377.28 L616.41 376.83 L616.96 376.41 L617.51 375.99 L618.08 375.59 L618.66 375.20 L619.24 374.82 L619.83 374.44 L620.42 374.06 L621.00 373.68 L621.59 373.30 L622.17 372.91 L622.75 372.52 L623.31 372.11 L623.87 371.70 L624.42 371.27 L624.95 370.82 L625.46 370.36 L625.97 369.88 L626.46 369.39 L626.94 368.89 L627.41 368.38 L627.88 367.86 L628.35 367.34 L628.82 366.82 L629.28 366.29 L629.74 365.77 L630.21 365.25 L630.67 364.72 L631.14 364.20 L631.61 363.68 L632.08 363.16 L632.55 362.64 L633.02 362.13 L633.50 361.62 L633.98 361.11 L634.47 360.61 L634.96 360.11 L635.45 359.61 L635.94 359.11 L636.44 358.62 L636.93 358.12 L637.42 357.63 L637.92 357.13 L638.41 356.64 L638.91 356.14 L639.40 355.64 L639.89 355.15 L640.38 354.65 L640.87 354.14 L641.35 353.64 L641.83 353.13 L642.30 352.61 L642.77 352.09 L643.23 351.57 L643.69 351.04 L644.14 350.50 L644.59 349.97 L645.03 349.43 L645.48 348.89 L645.92 348.34 L646.36 347.80 L646.81 347.26 L647.25 346.72 L647.69 346.17 L648.13 345.63 L648.57 345.09 L649.02 344.54 L649.46 344.00 L649.90 343.46 L650.34 342.92 L650.79 342.38 L651.23 341.83 L651.67 341.29 L652.12 340.75 L652.57 340.22 L653.02 339.68 L653.47 339.15 L653.93 338.62 L654.38 338.09 L654.84 337.56 L655.30 337.03 L655.76 336.50 L656.22 335.97 L656.68 335.45 L657.14 334.92 L657.61 334.39 L658.07 333.87 L658.53 333.34 L658.99 332.81 L659.45 332.29 L659.91 331.76 L660.37 331.24 L660.84 330.71 L661.30 330.18 L661.76 329.66 L662.22 329.13 L662.68 328.60 L663.14 328.08 L663.60 327.55 L664.06 327.02 L664.53 326.50 L664.99 325.97 L665.45 325.44 L665.91 324.92 L666.37 324.39 L666.83 323.86 L667.29 323.33 L667.74 322.80 L668.19 322.27 L668.64 321.73 L669.09 321.19 L669.53 320.65 L669.96 320.10 L670.39 319.55 L670.82 318.99 L671.25 318.44 L671.67 317.88 L672.09 317.32 L672.51 316.76 L672.93 316.20 L673.35 315.64 L673.77 315.08 L674.19 314.52 L674.61 313.96 L675.03 313.40 L675.45 312.84 L675.87 312.28 L676.29 311.72 L676.71 311.16 L677.13 310.60 L677.54 310.04 L677.96 309.48 L678.38 308.92 L678.80 308.36 L679.22 307.80 L679.64 307.24 L680.06 306.67 L680.48 306.11 L680.90 305.55 L681.31 304.99 L681.73 304.42 L682.14 303.86 L682.54 303.29 L682.95 302.72 L683.34 302.14 L683.73 301.56 L684.12 300.98 L684.50 300.39 L684.88 299.80 L685.26 299.21 L685.63 298.62 L686.00 298.03 L686.37 297.44 L686.75 296.84 L687.12 296.25 L687.49 295.66 L687.86 295.06 L688.23 294.47 L688.60 293.88 L688.97 293.28 L689.35 292.69 L689.72 292.09 L690.09 291.50 L690.46 290.91 L690.83 290.31 L691.20 289.72 L691.57 289.13 L691.94 288.53 L692.31 287.94 L692.68 287.35 L693.05 286.75 L693.42 286.16 L693.79 285.56 L694.15 284.96 L694.52 284.36 L694.87 283.76 L695.23 283.16 L695.58 282.56 L695.93 281.95 L696.28 281.34 L696.62 280.73 L696.96 280.12 L697.31 279.51 L697.65 278.90 L697.99 278.29 L698.33 277.68 L698.67 277.06 L699.01 276.45 L699.35 275.84 L699.69 275.23 L700.03 274.62 L700.37 274.01 L700.71 273.40 L701.05 272.78 L701.39 272.17 L701.74 271.56 L702.08 270.95 L702.42 270.34 L702.76 269.73 L703.10 269.12 L703.44 268.51 L703.78 267.90 L704.12 267.31 L704.46 266.67 L704.80 266.06 L705.14 265.45 L705.48 264.83 L705.82 264.22 L706.16 263.61 L706.50 263.00 L706.84 262.91 L707.18 263.53 L707.51 264.14 L707.84 264.76" stroke="#cc2828" stroke-width="1.7" fill="none" stroke-linejoin="round"/>
<path d="M55.00 466.20 L55.62 465.87 L56.24 465.54 L56.86 465.22 L57.47 464.89 L58.09 464.56 L58.71 464.23 L59.33 463.91 L59.95 463.58 L60.57 463.25 L61.19 462.92 L61.80 462.57 L62.41 462.23 L63.01 461.89 L63.62 461.54 L64.22 461.19 L64.82 460.83 L65.42 460.46 L66.01 460.09 L66.61 459.72 L67.20 459.35 L67.79 458.98 L68.38 458.61 L68.98 458.23 L69.57 457.86 L70.16 457.48 L70.75 457.10 L71.34 456.72 L71.92 456.35 L72.51 455.96 L73.10 455.58 L73.68 455.20 L74.27 454.81 L74.85 454.43 L75.44 454.04 L76.02 453.65 L76.60 453.27 L77.18 452.88 L77.77 452.49 L78.35 452.10 L78.93 451.71 L79.51 451.32 L80.10 450.94 L80.68 450.55 L81.26 450.16 L81.84 449.77 L82.42 449.37 L82.99 448.98 L83.56 448.57 L84.12 448.16 L84.67 447.74 L85.21 447.30 L85.74 446.85 L86.25 446.38 L86.74 445.90 L87.22 445.40 L87.69 444.88 L88.15 444.36 L88.61 443.83 L89.05 443.29 L89.48 442.74 L89.91 442.19 L90.33 441.63 L90.73 441.06 L91.12 440.49 L91.50 439.90 L91.87 439.31 L92.23 438.71 L92.58 438.11 L92.93 437.50 L93.27 436.89 L93.62 436.28 L93.96 435.67 L94.29 435.06 L94.63 434.44 L94.96 433.83 L95.29 433.21 L95.61 432.59 L95.93 431.97 L96.24 431.34 L96.55 430.71 L96.85 430.08 L97.15 429.45 L97.44 428.81 L97.73 428.18 L98.03 427.54 L98.32 426.90 L98.61 426.27 L98.89 425.63 L99.18 424.99 L99.47 424.35 L99.76 423.71 L100.04 423.08 L100.33 422.44 L100.61 421.79 L100.89 421.15 L101.16 420.51 L101.43 419.86 L101.70 419.22 L101.96 418.57 L102.23 417.92 L102.49 417.27 L102.75 416.62 L103.01 415.97 L103.27 415.32 L103.53 414.67 L103.79 414.02 L104.05 413.37 L104.31 412.72 L104.57 412.07 L104.83 411.42 L105.09 410.77 L105.35 410.12 L105.61 409.47 L105.88 408.83 L106.14 408.18 L106.41 407.53 L106.67 406.88 L106.95 406.24 L107.22 405.59 L107.50 404.95 L107.78 404.31 L108.06 403.67 L108.34 403.03 L108.63 402.39 L108.91 401.75 L109.20 401.11 L109.48 400.47 L109.76 399.83 L110.04 399.19 L110.31 398.55 L110.56 397.90 L110.80 397.25 L111.03 396.59 L111.23 395.93 L111.41 395.26 L111.58 394.59 L111.72 393.91 L111.85 393.22 L111.97 392.53 L112.08 391.84 L112.19 391.15 L112.29 390.46 L112.39 389.77 L112.49 389.08 L112.59 388.38 L112.69 387.69 L112.79 387.00 L112.89 386.30 L112.98 385.61 L113.08 384.92 L113.18 384.23 L113.28 383.53 L113.38 382.84 L113.48 382.15 L113.58 381.45 L113.68 380.76 L113.78 380.07 L113.88 379.37 L113.97 378.68 L114.07 377.99 L114.17 377.30 L114.27 376.60 L114.37 375.91 L114.47 375.22 L114.57 374.52 L114.67 373.83 L114.77 373.14 L114.86 372.45 L114.96 371.75 L115.06 371.06 L115.16 370.37 L115.26 369.67 L115.36 368.98 L115.46 368.29 L115.56 367.59 L115.66 366.90 L115.76 366.21 L115.85 365.52 L115.95 364.82 L116.05 364.13 L116.15 363.44 L116.25 362.74 L116.35 362.05 L116.45 361.36 L116.55 360.66 L116.65 359.97 L116.75 359.28 L116.85 358.59 L116.95 357.89 L117.05 357.20 L117.16 356.51 L117.28 355.82 L117.39 355.13 L117.52 354.44 L117.65 353.76 L117.79 353.07 L117.94 352.39 L118.10 351.71 L118.26 351.03 L118.42 350.35 L118.59 349.67 L118.76 348.99 L118.92 348.31 L119.09 347.63 L119.26 346.95 L119.43 346.27 L119.60 345.59 L119.77 344.91 L119.94 344.23 L120.11 343.55 L120.28 342.87 L120.45 342.20 L120.62 341.52 L120.79 340.84 L120.96 340.16 L121.12 339.48 L121.29 338.80 L121.45 338.12 L121.60 337.43 L121.75 336.75 L121.90 336.07 L122.03 335.38 L122.16 334.69 L122.28 334.01 L122.40 333.32 L122.52 332.63 L122.63 331.93 L122.74 331.24 L122.85 330.55 L122.96 329.86 L123.07 329.17 L123.18 328.48 L123.28 327.79 L123.39 327.09 L123.50 326.40 L123.61 325.71 L123.71 325.02 L123.82 324.33 L123.93 323.64 L124.03 322.94 L124.13 322.25 L124.23 321.56 L124.33 320.87 L124.42 320.17 L124.51 319.48 L124.59 318.78 L124.67 318.09 L124.75 317.39 L124.82 316.70 L124.90 316.00 L124.97 315.30 L125.04 314.61 L125.11 313.91 L125.18 313.21 L125.25 312.52 L125.32 311.82 L125.39 311.12 L125.46 310.43 L125.53 309.73 L125.60 309.04 L125.67 308.34 L125.74 307.64 L125.81 306.95 L125.88 306.25 L125.94 305.55 L126.01 304.86 L126.08 304.16 L126.15 303.46 L126.22 302.77 L126.29 302.07 L126.36 301.37 L126.42 300.68 L126.49 299.98 L126.55 299.28 L126.62 298.58 L126.68 297.89 L126.74 297.19 L126.80 296.49 L126.86 295.80 L126.92 295.10 L126.98 294.40 L127.04 293.70 L127.10 293.01 L127.16 292.31 L127.22 291.61 L127.28 290.91 L127.34 290.22 L127.40 289.52 L127.46 288.82 L127.52 288.12 L127.58 287.43 L127.64 286.73 L127.70 286.03 L127.77 285.34 L127.84 284.64 L127.91 283.94 L127.99 283.25 L128.07 282.55 L128.16 281.86 L128.26 281.17 L128.36 280.47 L128.46 279.78 L128.57 279.09 L128.68 278.40 L128.79 277.71 L128.90 277.02 L129.02 276.33 L129.13 275.64 L129.24 274.95 L129.36 274.26 L129.47 273.56 L129.58 272.87 L129.70 272.18 L129.81 271.49 L129.92 270.80 L130.04 270.11 L130.15 269.42 L130.26 268.73 L130.38 268.04 L130.49 267.35 L130.61 266.66 L130.72 265.97 L130.83 265.28 L130.94 264.58 L131.05 263.89 L131.16 263.20 L131.27 262.51 L131.37 261.82 L131.47 261.13 L131.57 260.43 L131.66 259.74 L131.74 259.04 L131.81 258.35 L131.89 257.65 L131.95 256.96 L132.02 256.26 L132.08 255.56 L132.14 254.87 L132.20 254.17 L132.27 253.47 L132.33 252.77 L132.39 252.08 L132.45 251.38 L132.51 250.68 L132.57 249.98 L132.63 249.29 L132.69 248.59 L132.75 247.89 L132.81 247.19 L132.87 246.50 L132.93 245.80 L132.99 245.10 L133.05 244.41 L133.11 243.71 L133.17 243.01 L133.23 242.31 L133.29 241.62 L133.35 240.92 L133.41 240.22 L133.47 239.52 L133.54 238.83 L133.60 238.13 L133.66 237.43 L133.72 236.73 L133.78 236.04 L133.84 235.34 L133.90 234.64 L133.96 233.94 L134.02 233.25 L134.07 232.55 L134.13 231.85 L134.18 231.15 L134.24 230.46 L134.29 229.76 L134.34 229.06 L134.38 228.36 L134.43 227.66 L134.47 226.96 L134.51 226.27 L134.55 225.57 L134.59 224.87 L134.63 224.17 L134.67 223.47 L134.71 222.77 L134.75 222.07 L134.79 221.37 L134.83 220.67 L134.87 219.98 L134.91 219.28 L134.95 218.58 L134.99 217.88 L135.03 217.18 L135.07 216.48 L135.11 215.78 L135.15 215.08 L135.19 214.38 L135.23 213.69 L135.27 212.99 L135.32 212.29 L135.36 211.59 L135.40 210.89 L135.45 210.19 L135.50 209.49 L135.55 208.80 L135.60 208.10 L135.66 207.40 L135.72 206.70 L135.78 206.01 L135.84 205.31 L135.90 204.61 L135.96 203.91 L136.03 203.22 L136.09 202.52 L136.15 201.82 L136.22 201.13 L136.28 200.43 L136.34 199.73 L136.41 199.03 L136.47 198.34 L136.53 197.64 L136.60 196.94 L136.66 196.25 L136.72 195.55 L136.79 194.85 L136.85 194.15 L136.91 193.46 L136.97 192.76 L137.02 192.06 L137.07 191.36 L137.11 190.66 L137.16 189.97 L137.20 189.27 L137.24 188.57 L137.29 187.87 L137.33 187.17 L137.37 186.47 L137.42 185.77 L137.46 185.08 L137.50 184.38 L137.55 183.68 L137.59 182.98 L137.63 182.28 L137.68 181.66 L137.77 181.61 L137.91 182.20 L138.05 182.88 L138.20 183.56 L138.34 184.25 L138.48 184.94 L138.56 185.63 L138.62 186.33 L138.69 187.02 L138.75 187.72 L138.82 188.42 L138.88 189.12 L138.95 189.81 L139.01 190.51 L139.08 191.21 L139.15 191.90 L139.21 192.60 L139.28 193.30 L139.35 193.99 L139.42 194.69 L139.50 195.39 L139.57 196.08 L139.64 196.78 L139.71 197.48 L139.78 198.17 L139.85 198.87 L139.92 199.56 L139.99 200.26 L140.06 200.96 L140.14 201.65 L140.21 202.35 L140.28 203.05 L140.35 203.74 L140.42 204.44 L140.49 205.14 L140.56 205.83 L140.63 206.53 L140.71 207.22 L140.78 207.92 L140.85 208.62 L140.92 209.31 L140.99 210.01 L141.06 210.71 L141.13 211.40 L141.20 212.10 L141.27 212.80 L141.34 213.49 L141.40 214.19 L141.47 214.89 L141.53 215.58 L141.59 216.28 L141.65 216.98 L141.71 217.68 L141.77 218.37 L141.83 219.07 L141.89 219.77 L141.95 220.47 L142.00 221.16 L142.06 221.86 L142.12 222.56 L142.17 223.26 L142.23 223.95 L142.29 224.65 L142.34 225.35 L142.40 226.05 L142.46 226.74 L142.51 227.44 L142.57 228.14 L142.63 228.84 L142.68 229.54 L142.74 230.23 L142.80 230.93 L142.85 231.63 L142.91 232.33 L142.97 233.02 L143.03 233.72 L143.08 234.42 L143.14 235.12 L143.20 235.81 L143.25 236.51 L143.31 237.21 L143.36 237.91 L143.42 238.61 L143.47 239.30 L143.53 240.00 L143.58 240.70 L143.62 241.40 L143.67 242.10 L143.71 242.79 L143.75 243.49 L143.79 244.19 L143.82 244.89 L143.86 245.59 L143.89 246.29 L143.92 246.99 L143.95 247.69 L143.98 248.39 L144.01 249.09 L144.05 249.79 L144.08 250.49 L144.11 251.19 L144.14 251.88 L144.17 252.58 L144.20 253.28 L144.23 253.98 L144.26 254.68 L144.30 255.38 L144.33 256.08 L144.36 256.78 L144.40 257.48 L144.44 258.18 L144.48 258.88 L144.52 259.57 L144.57 260.27 L144.63 260.97 L144.68 261.67 L144.74 262.36 L144.81 263.06 L144.87 263.76 L144.94 264.46 L145.00 265.15 L145.07 265.85 L145.14 266.55 L145.21 267.24 L145.28 267.94 L145.34 268.64 L145.41 269.33 L145.48 270.03 L145.55 270.73 L145.62 271.42 L145.68 272.12 L145.75 272.82 L145.82 273.51 L145.89 274.21 L145.96 274.91 L146.03 275.60 L146.09 276.30 L146.16 277.00 L146.23 277.69 L146.30 278.39 L146.36 279.09 L146.43 279.78 L146.49 280.48 L146.55 281.18 L146.60 281.87 L146.65 282.57 L146.70 283.27 L146.75 283.97 L146.79 284.67 L146.82 285.37 L146.86 286.07 L146.89 286.76 L146.93 287.46 L146.96 288.16 L146.99 288.86 L147.02 289.56 L147.05 290.26 L147.09 290.96 L147.12 291.66 L147.15 292.36 L147.18 293.06 L147.21 293.76 L147.25 294.46 L147.28 295.16 L147.31 295.86 L147.34 296.55 L147.38 297.25 L147.41 297.95 L147.45 298.65 L147.48 299.35 L147.52 300.05 L147.56 300.75 L147.60 301.45 L147.64 302.15 L147.68 302.85 L147.72 303.54 L147.77 304.24 L147.81 304.94 L147.85 305.64 L147.90 306.34 L147.94 307.04 L147.98 307.74 L148.03 308.43 L148.07 309.13 L148.11 309.83 L148.16 310.53 L148.20 311.23 L148.25 311.93 L148.29 312.63 L148.33 313.32 L148.38 314.02 L148.42 314.72 L148.46 315.42 L148.51 316.12 L148.55 316.82 L148.60 317.52 L148.64 318.22 L148.68 318.91 L148.73 319.61 L148.78 320.31 L148.83 321.01 L148.88 321.71 L148.94 322.40 L149.01 323.10 L149.08 323.79 L149.16 324.49 L149.25 325.18 L149.35 325.87 L149.45 326.57 L149.55 327.26 L149.66 327.95 L149.78 328.64 L149.89 329.33 L150.00 330.02 L150.12 330.71 L150.23 331.40 L150.35 332.09 L150.46 332.78 L150.58 333.47 L150.69 334.16 L150.81 334.85 L150.92 335.54 L151.04 336.24 L151.15 336.93 L151.27 337.62 L151.38 338.31 L151.50 339.00 L151.61 339.69 L151.73 340.38 L151.84 341.07 L151.96 341.76 L152.07 342.45 L152.19 343.14 L152.31 343.83 L152.42 344.52 L152.54 345.21 L152.65 345.90 L152.77 346.59 L152.88 347.28 L153.00 347.97 L153.11 348.66 L153.23 349.35 L153.34 350.04 L153.46 350.74 L153.57 351.43 L153.69 352.12 L153.80 352.81 L153.92 353.50 L154.03 354.19 L154.15 354.88 L154.26 355.57 L154.38 356.26 L154.49 356.95 L154.61 357.64 L154.72 358.33 L154.84 359.02 L154.95 359.71 L155.07 360.40 L155.18 361.09 L155.30 361.78 L155.41 362.47 L155.53 363.16 L155.64 363.85 L155.76 364.54 L155.87 365.24 L155.99 365.93 L156.10 366.62 L156.22 367.31 L156.33 368.00 L156.45 368.69 L156.56 369.38 L156.68 370.07 L156.79 370.76 L156.91 371.45 L157.02 372.14 L157.13 372.83 L157.24 373.52 L157.35 374.21 L157.45 374.91 L157.56 375.60 L157.66 376.29 L157.75 376.98 L157.85 377.68 L157.95 378.37 L158.04 379.06 L158.13 379.76 L158.23 380.45 L158.32 381.15 L158.41 381.84 L158.50 382.53 L158.60 383.23 L158.69 383.92 L158.78 384.62 L158.88 385.31 L158.97 386.00 L159.07 386.70 L159.17 387.39 L159.27 388.08 L159.38 388.77 L159.50 389.46 L159.62 390.15 L159.75 390.84 L159.89 391.52 L160.03 392.21 L160.18 392.89 L160.33 393.57 L160.49 394.26 L160.64 394.94 L160.80 395.62 L160.95 396.30 L161.11 396.98 L161.27 397.67 L161.43 398.35 L161.59 399.03 L161.75 399.71 L161.91 400.39 L162.07 401.07 L162.23 401.75 L162.40 402.43 L162.57 403.11 L162.74 403.79 L162.92 404.47 L163.10 405.15 L163.28 405.82 L163.46 406.50 L163.64 407.17 L163.82 407.85 L164.01 408.52 L164.19 409.20 L164.38 409.87 L164.56 410.55 L164.75 411.22 L164.94 411.90 L165.13 412.57 L165.32 413.24 L165.52 413.92 L165.72 414.59 L165.92 415.26 L166.13 415.93 L166.33 416.59 L166.54 417.26 L166.75 417.93 L166.96 418.60 L167.18 419.26 L167.39 419.93 L167.60 420.60 L167.82 421.26 L168.03 421.93 L168.25 422.59 L168.47 423.26 L168.70 423.92 L168.93 424.58 L169.16 425.24 L169.40 425.90 L169.65 426.55 L169.90 427.21 L170.15 427.86 L170.41 428.51 L170.67 429.16 L170.93 429.81 L171.19 430.46 L171.45 431.11 L171.71 431.76 L171.98 432.40 L172.25 433.05 L172.52 433.69 L172.80 434.34 L173.08 434.98 L173.37 435.61 L173.66 436.25 L173.96 436.88 L174.27 437.51 L174.58 438.14 L174.89 438.76 L175.21 439.39 L175.52 440.01 L175.85 440.63 L176.18 441.25 L176.52 441.86 L176.86 442.46 L177.22 443.06 L177.59 443.65 L177.96 444.24 L178.35 444.82 L178.74 445.40 L179.14 445.98 L179.55 446.55 L179.95 447.12 L180.37 447.68 L180.78 448.25 L181.20 448.80 L181.62 449.36 L182.05 449.91 L182.49 450.46 L182.93 451.00 L183.38 451.54 L183.83 452.07 L184.29 452.60 L184.75 453.13 L185.21 453.66 L185.67 454.18 L186.13 454.71 L186.59 455.23 L187.06 455.75 L187.53 456.27 L188.01 456.78 L188.49 457.29 L188.98 457.79 L189.47 458.28 L189.98 458.77 L190.49 459.24 L191.00 459.72 L191.52 460.19 L192.04 460.65 L192.57 461.11 L193.09 461.57 L193.62 462.03 L194.15 462.48 L194.69 462.93 L195.23 463.36 L195.78 463.79 L196.34 464.20 L196.92 464.59 L197.50 464.96 L198.10 465.31 L198.70 465.65 L199.32 465.96 L199.95 466.27 L200.58 466.57 L201.21 466.86 L201.85 467.15 L202.49 467.43 L203.13 467.71 L203.77 467.99 L204.41 468.27 L205.06 468.54 L205.71 468.81 L206.35 469.07 L207.01 469.33 L207.66 469.58 L208.31 469.83 L208.97 470.07 L209.62 470.32 L210.28 470.56 L210.94 470.80 L211.60 471.04 L212.25 471.28 L212.91 471.51 L213.57 471.75 L214.23 471.98 L214.89 472.21 L215.56 472.43 L216.22 472.65 L216.89 472.86 L217.56 473.06 L218.23 473.26 L218.90 473.45 L219.58 473.63 L220.25 473.81 L220.93 473.99 L221.60 474.17 L222.28 474.35 L222.96 474.52 L223.64 474.70 L224.31 474.88 L224.99 475.05 L225.67 475.23 L226.35 475.40 L227.02 475.58 L227.70 475.75 L228.38 475.92 L229.06 476.09 L229.74 476.26 L230.42 476.42 L231.10 476.57 L231.78 476.72 L232.47 476.85 L233.16 476.97 L233.85 477.08 L234.54 477.18 L235.23 477.28 L235.92 477.37 L236.62 477.45 L237.31 477.53 L238.01 477.61 L238.70 477.69 L239.40 477.77 L240.10 477.84 L240.79 477.92 L241.49 478.00 L242.18 478.08 L242.88 478.15 L243.57 478.23 L244.27 478.31 L244.97 478.39 L245.66 478.46 L246.36 478.54 L247.05 478.62 L247.75 478.69 L248.44 478.77 L249.14 478.85 L249.84 478.93 L250.53 479.00 L251.23 479.08 L251.92 479.15 L252.62 479.22 L253.32 479.29 L254.01 479.35 L254.71 479.41 L255.41 479.46 L256.11 479.51 L256.80 479.56 L257.50 479.60 L258.20 479.63 L258.90 479.67 L259.60 479.70 L260.30 479.73 L261.00 479.76 L261.70 479.79 L262.40 479.83 L263.10 479.86 L263.80 479.89 L264.50 479.92 L265.19 479.95 L265.89 479.98 L266.59 480.01 L267.29 480.04 L267.99 480.07 L268.69 480.10 L269.39 480.13 L270.09 480.16 L270.79 480.20 L271.49 480.23 L272.19 480.26 L272.89 480.29 L273.59 480.32 L274.29 480.35 L274.99 480.38 L275.68 480.41 L276.38 480.44 L277.08 480.47 L277.78 480.50 L278.48 480.53 L279.18 480.56 L279.88 480.60 L280.58 480.62 L281.28 480.65 L281.98 480.68 L282.68 480.70 L283.38 480.73 L284.08 480.75 L284.78 480.76 L285.48 480.77 L286.18 480.78 L286.88 480.79 L287.58 480.79 L288.28 480.80 L288.98 480.80 L289.68 480.80 L290.38 480.80 L291.08 480.80 L291.78 480.80 L292.48 480.80 L293.18 480.80 L293.88 480.80 L294.58 480.80 L295.28 480.80 L295.98 480.80 L296.68 480.80 L297.38 480.80 L298.08 480.80 L298.78 480.80 L299.48 480.80 L300.18 480.80 L300.88 480.80 L301.58 480.80 L302.28 480.80 L302.98 480.80 L303.68 480.80 L304.38 480.80 L305.08 480.80 L305.78 480.80 L306.48 480.80 L307.18 480.79 L307.88 480.79 L308.58 480.78 L309.28 480.77 L309.97 480.76 L310.67 480.75 L311.37 480.73 L312.07 480.70 L312.77 480.67 L313.47 480.64 L314.17 480.61 L314.87 480.58 L315.57 480.55 L316.27 480.51 L316.97 480.48 L317.67 480.44 L318.37 480.41 L319.07 480.37 L319.76 480.34 L320.46 480.30 L321.16 480.27 L321.86 480.23 L322.56 480.20 L323.26 480.16 L323.96 480.13 L324.66 480.09 L325.36 480.06 L326.06 480.02 L326.76 479.99 L327.45 479.95 L328.15 479.92 L328.85 479.88 L329.55 479.85 L330.25 479.81 L330.95 479.78 L331.65 479.74 L332.35 479.71 L333.05 479.67 L333.75 479.63 L334.45 479.59 L335.14 479.55 L335.84 479.50 L336.54 479.45 L337.24 479.40 L337.94 479.34 L338.63 479.28 L339.33 479.22 L340.03 479.16 L340.72 479.09 L341.42 479.03 L342.12 478.96 L342.81 478.89 L343.51 478.83 L344.21 478.76 L344.90 478.69 L345.60 478.62 L346.30 478.56 L347.00 478.49 L347.69 478.42 L348.39 478.36 L349.09 478.29 L349.78 478.22 L350.48 478.16 L351.18 478.09 L351.87 478.02 L352.57 477.95 L353.27 477.89 L353.96 477.82 L354.66 477.75 L355.36 477.69 L356.05 477.62 L356.75 477.55 L357.45 477.49 L358.14 477.42 L358.84 477.35 L359.54 477.28 L360.23 477.21 L360.93 477.14 L361.63 477.07 L362.32 476.99 L363.02 476.92 L363.71 476.84 L364.41 476.76 L365.10 476.67 L365.80 476.59 L366.49 476.51 L367.19 476.42 L367.88 476.34 L368.58 476.25 L369.27 476.17 L369.97 476.08 L370.66 476.00 L371.36 475.91 L372.05 475.82 L372.75 475.74 L373.44 475.65 L374.14 475.57 L374.83 475.48 L375.53 475.40 L376.22 475.31 L376.91 475.23 L377.61 475.14 L378.30 475.05 L379.00 474.97 L379.69 474.88 L380.39 474.80 L381.08 474.71 L381.78 474.63 L382.47 474.54 L383.17 474.46 L383.86 474.37 L384.56 474.29 L385.25 474.20 L385.95 474.11 L386.64 474.03 L387.34 473.94 L388.03 473.86 L388.73 473.77 L389.42 473.69 L390.12 473.60 L390.81 473.51 L391.50 473.43 L392.20 473.34 L392.89 473.25 L393.59 473.16 L394.28 473.07 L394.97 472.97 L395.67 472.88 L396.36 472.78 L397.05 472.68 L397.75 472.57 L398.44 472.47 L399.13 472.36 L399.82 472.26 L400.51 472.15 L401.21 472.05 L401.90 471.94 L402.59 471.83 L403.28 471.73 L403.97 471.62 L404.66 471.51 L405.36 471.41 L406.05 471.30 L406.74 471.19 L407.43 471.09 L408.12 470.98 L408.82 470.87 L409.51 470.77 L410.20 470.66 L410.89 470.56 L411.58 470.45 L412.28 470.34 L412.97 470.24 L413.66 470.13 L414.35 470.02 L415.04 469.92 L415.73 469.81 L416.43 469.70 L417.12 469.60 L417.81 469.49 L418.50 469.38 L419.19 469.28 L419.89 469.17 L420.58 469.07 L421.27 468.96 L421.96 468.85 L422.65 468.75 L423.35 468.64 L424.04 468.54 L424.73 468.43 L425.42 468.33 L426.12 468.24 L426.81 468.14 L427.50 468.05 L428.20 467.96 L428.89 467.88 L429.59 467.80 L430.28 467.72 L430.98 467.64 L431.67 467.57 L432.37 467.49 L433.07 467.42 L433.76 467.35 L434.46 467.27 L435.15 467.20 L435.85 467.12 L436.54 467.04 L437.24 466.95 L437.93 466.85 L438.61 466.74 L439.30 466.62 L439.98 466.48 L440.66 466.33 L441.33 466.15 L442.01 465.97 L442.67 465.77 L443.34 465.56 L444.01 465.35 L444.67 465.13 L445.34 464.91 L446.00 464.69 L446.66 464.47 L447.33 464.25 L447.99 464.02 L448.66 463.80 L449.32 463.58 L449.98 463.36 L450.65 463.14 L451.31 462.91 L451.98 462.69 L452.64 462.47 L453.30 462.25 L453.97 462.02 L454.63 461.80 L455.29 461.58 L455.96 461.36 L456.62 461.14 L457.29 460.91 L457.95 460.69 L458.61 460.47 L459.28 460.24 L459.94 460.02 L460.60 459.79 L461.26 459.56 L461.92 459.33 L462.58 459.09 L463.24 458.85 L463.89 458.61 L464.55 458.36 L465.20 458.11 L465.85 457.85 L466.50 457.59 L467.15 457.34 L467.80 457.08 L468.45 456.82 L469.10 456.56 L469.75 456.30 L470.40 456.04 L471.05 455.78 L471.70 455.52 L472.35 455.26 L473.00 455.00 L473.65 454.74 L474.30 454.48 L474.95 454.22 L475.60 453.96 L476.25 453.70 L476.90 453.44 L477.55 453.19 L478.21 452.94 L478.86 452.70 L479.51 452.48 L480.17 452.27 L480.84 452.09 L481.50 451.94 L482.17 451.83 L482.85 451.75 L483.53 451.70 L484.22 451.68 L484.91 451.68 L485.60 451.69 L486.30 451.71 L486.99 451.73 L487.68 451.74 L488.38 451.74 L489.06 451.71 L489.75 451.65 L490.43 451.57 L491.11 451.46 L491.79 451.32 L492.46 451.16 L493.13 450.98 L493.81 450.79 L494.48 450.60 L495.14 450.40 L495.81 450.19 L496.48 449.98 L497.15 449.78 L497.82 449.57 L498.49 449.36 L499.16 449.15 L499.82 448.95 L500.49 448.74 L501.16 448.53 L501.83 448.32 L502.50 448.11 L503.17 447.91 L503.83 447.70 L504.50 447.49 L505.17 447.28 L505.84 447.08 L506.51 446.87 L507.18 446.66 L507.85 446.45 L508.51 446.24 L509.18 446.04 L509.85 445.83 L510.52 445.62 L511.19 445.41 L511.85 445.20 L512.52 444.99 L513.19 444.78 L513.85 444.56 L514.52 444.34 L515.17 444.11 L515.83 443.87 L516.48 443.61 L517.13 443.35 L517.77 443.08 L518.41 442.79 L519.04 442.50 L519.67 442.20 L520.30 441.90 L520.93 441.59 L521.56 441.28 L522.18 440.97 L522.81 440.66 L523.44 440.34 L524.06 440.03 L524.69 439.72 L525.32 439.41 L525.94 439.10 L526.57 438.78 L527.20 438.47 L527.82 438.16 L528.45 437.85 L529.08 437.53 L529.70 437.22 L530.33 436.91 L530.96 436.60 L531.58 436.29 L532.21 435.97 L532.84 435.66 L533.46 435.35 L534.09 435.04 L534.72 434.73 L535.34 434.41 L535.97 434.10 L536.60 433.79 L537.22 433.48 L537.85 433.16 L538.47 432.85 L539.10 432.54 L539.73 432.22 L540.35 431.91 L540.97 431.59 L541.59 431.26 L542.21 430.93 L542.82 430.60 L543.43 430.25 L544.03 429.90 L544.63 429.54 L545.22 429.17 L545.81 428.79 L546.40 428.41 L546.98 428.03 L547.57 427.64 L548.15 427.25 L548.73 426.87 L549.31 426.48 L549.90 426.09 L550.48 425.70 L551.06 425.31 L551.64 424.92 L552.22 424.53 L552.80 424.14 L553.39 423.75 L553.97 423.36 L554.55 422.97 L555.13 422.58 L555.71 422.19 L556.29 421.81 L556.88 421.42 L557.46 421.03 L558.04 420.64 L558.62 420.25 L559.20 419.86 L559.79 419.47 L560.37 419.08 L560.95 418.69 L561.53 418.30 L562.11 417.91 L562.69 417.52 L563.28 417.13 L563.86 416.74 L564.44 416.36 L565.02 415.97 L565.60 415.58 L566.18 415.19 L566.77 414.80 L567.35 414.41 L567.93 414.02 L568.51 413.63 L569.09 413.24 L569.68 412.85 L570.26 412.46 L570.84 412.07 L571.42 411.68 L572.00 411.29 L572.58 410.91 L573.17 410.52 L573.75 410.13 L574.33 409.74 L574.91 409.35 L575.49 408.96 L576.07 408.57 L576.66 408.18 L577.24 407.79 L577.82 407.40 L578.40 407.01 L578.98 406.62 L579.56 406.23 L580.14 405.84 L580.72 405.45 L581.30 405.05 L581.87 404.65 L582.44 404.24 L583.00 403.82 L583.55 403.40 L584.10 402.97 L584.64 402.52 L585.17 402.07 L585.70 401.61 L586.22 401.15 L586.74 400.68 L587.26 400.21 L587.77 399.73 L588.28 399.26 L588.79 398.78 L589.30 398.29 L589.80 397.80 L590.30 397.31 L590.79 396.82 L591.28 396.32 L591.77 395.82 L592.25 395.31 L592.74 394.81 L593.22 394.30 L593.70 393.80 L594.19 393.29 L594.67 392.78 L595.15 392.28 L595.64 391.78 L596.12 391.28 L596.62 390.79 L597.11 390.33 L597.62 389.88 L598.15 389.47 L598.69 389.11 L599.25 388.79 L599.84 388.52 L600.45 388.31 L601.08 388.14 L601.72 388.01 L602.37 387.89 L603.03 387.77 L603.67 387.64 L604.31 387.47 L604.93 387.25 L605.52 386.99 L606.10 386.68 L606.66 386.32 L607.20 385.92 L607.73 385.49 L608.24 385.03 L608.74 384.55 L609.23 384.06 L609.71 383.55 L610.18 383.04 L610.65 382.52 L611.11 382.00 L611.57 381.47 L612.03 380.94 L612.49 380.42 L612.96 379.89 L613.42 379.37 L613.89 378.86 L614.37 378.36 L614.86 377.86 L615.37 377.39 L615.88 376.92 L616.41 376.48 L616.96 376.05 L617.52 375.64 L618.09 375.24 L618.67 374.85 L619.25 374.46 L619.83 374.08 L620.42 373.70 L621.01 373.32 L621.59 372.94 L622.18 372.56 L622.75 372.16 L623.32 371.76 L623.88 371.35 L624.42 370.92 L624.95 370.47 L625.47 370.01 L625.97 369.53 L626.46 369.04 L626.94 368.54 L627.42 368.02 L627.89 367.51 L628.35 366.99 L628.82 366.46 L629.28 365.94 L629.75 365.42 L630.21 364.89 L630.68 364.37 L631.14 363.85 L631.61 363.33 L632.08 362.81 L632.55 362.29 L633.03 361.78 L633.51 361.27 L633.99 360.76 L634.47 360.26 L634.96 359.76 L635.45 359.26 L635.95 358.76 L636.44 358.26 L636.93 357.77 L637.43 357.27 L637.92 356.78 L638.42 356.28 L638.91 355.79 L639.40 355.29 L639.90 354.79 L640.39 354.29 L640.87 353.79 L641.36 353.28 L641.84 352.77 L642.31 352.26 L642.78 351.74 L643.24 351.21 L643.69 350.68 L644.14 350.15 L644.59 349.61 L645.04 349.07 L645.48 348.53 L645.92 347.99 L646.37 347.45 L646.81 346.91 L647.25 346.36 L647.69 345.82 L648.14 345.28 L648.58 344.73 L649.02 344.19 L649.46 343.65 L649.90 343.11 L650.35 342.56 L650.79 342.02 L651.23 341.48 L651.68 340.94 L652.12 340.40 L652.57 339.86 L653.02 339.33 L653.48 338.79 L653.93 338.26 L654.39 337.73 L654.85 337.20 L655.31 336.67 L655.77 336.15 L656.23 335.62 L656.69 335.09 L657.15 334.57 L657.61 334.04 L658.07 333.51 L658.53 332.99 L658.99 332.46 L659.45 331.93 L659.92 331.41 L660.38 330.88 L660.84 330.36 L661.30 329.83 L661.76 329.30 L662.22 328.78 L662.68 328.25 L663.15 327.72 L663.61 327.20 L664.07 326.67 L664.53 326.14 L664.99 325.62 L665.45 325.09 L665.91 324.56 L666.37 324.04 L666.83 323.51 L667.29 322.98 L667.74 322.45 L668.20 321.91 L668.65 321.38 L669.09 320.84 L669.53 320.29 L669.97 319.74 L670.40 319.19 L670.82 318.64 L671.25 318.08 L671.67 317.53 L672.09 316.97 L672.51 316.41 L672.93 315.85 L673.35 315.29 L673.77 314.73 L674.19 314.17 L674.61 313.61 L675.03 313.05 L675.45 312.49 L675.87 311.92 L676.29 311.36 L676.71 310.80 L677.13 310.24 L677.55 309.68 L677.97 309.12 L678.39 308.56 L678.81 308.00 L679.23 307.44 L679.64 306.88 L680.06 306.32 L680.48 305.76 L680.90 305.20 L681.32 304.63 L681.73 304.07 L682.14 303.50 L682.55 302.93 L682.95 302.36 L683.35 301.79 L683.74 301.21 L684.12 300.62 L684.50 300.04 L684.88 299.45 L685.26 298.86 L685.63 298.27 L686.00 297.67 L686.38 297.08 L686.75 296.49 L687.12 295.89 L687.49 295.30 L687.86 294.71 L688.23 294.11 L688.61 293.52 L688.98 292.93 L689.35 292.33 L689.72 291.74 L690.09 291.15 L690.46 290.55 L690.83 289.96 L691.20 289.37 L691.58 288.77 L691.95 288.18 L692.32 287.59 L692.69 286.99 L693.06 286.40 L693.43 285.80 L693.79 285.21 L694.16 284.61 L694.52 284.01 L694.88 283.41 L695.23 282.81 L695.58 282.20 L695.93 281.59 L696.28 280.99 L696.62 280.38 L696.97 279.77 L697.31 279.16 L697.65 278.54 L697.99 277.93 L698.33 277.32 L698.67 276.71 L699.01 276.10 L699.35 275.49 L699.69 274.88 L700.03 274.26 L700.37 273.65 L700.72 273.04 L701.06 272.43 L701.40 271.82 L701.74 271.21 L702.08 270.60 L702.42 269.98 L702.76 269.37 L703.10 268.76 L703.44 268.15 L703.78 267.55 L704.12 266.95 L704.46 266.31 L704.80 265.70 L705.14 265.09 L705.49 264.48 L705.83 263.87 L706.17 263.26 L706.51 262.65 L706.84 262.57 L707.18 263.18 L707.51 263.80 L707.85 264.41" stroke="#111" stroke-width="1.8" fill="none" stroke-linejoin="round"/>
<text x="50.6" y="124.3" text-anchor="end" style="letter-spacing:-0.55px">60.0</text>
<text x="50.6" y="164.4" text-anchor="end" style="letter-spacing:-0.55px">54.0</text>
<text x="50.6" y="204.5" text-anchor="end" style="letter-spacing:-0.55px">48.0</text>
<text x="50.6" y="244.6" text-anchor="end" style="letter-spacing:-0.55px">42.0</text>
<text x="50.6" y="284.7" text-anchor="end" style="letter-spacing:-0.55px">36.0</text>
<text x="50.6" y="324.8" text-anchor="end" style="letter-spacing:-0.55px">30.0</text>
<text x="50.6" y="364.9" text-anchor="end" style="letter-spacing:-0.55px">24.0</text>
<text x="50.6" y="405.0" text-anchor="end" style="letter-spacing:-0.55px">18.0</text>
<text x="50.6" y="445.1" text-anchor="end" style="letter-spacing:-0.55px">12.0</text>
<text x="50.6" y="485.2" text-anchor="end" style="letter-spacing:-0.55px">6.0</text>
<text x="50.6" y="525.3" text-anchor="end" style="letter-spacing:-0.55px">0.0</text>
<text x="55.0" y="538.5" text-anchor="middle">20</text>
<text x="141.6" y="538.5" text-anchor="middle">50</text>
<text x="207.1" y="538.5" text-anchor="middle">100</text>
<text x="272.7" y="538.5" text-anchor="middle">200</text>
<text x="359.3" y="538.5" text-anchor="middle">500</text>
<text x="424.8" y="538.5" text-anchor="middle">1k</text>
<text x="490.3" y="538.5" text-anchor="middle">2k</text>
<text x="577.0" y="538.5" text-anchor="middle">5k</text>
<text x="642.5" y="538.5" text-anchor="middle">10k</text>
<text x="708.0" y="538.5" text-anchor="middle">20k</text>

<text x="56" y="115">Magnitude(ohms)</text>
<text x="351" y="115">Impedance</text>
<text x="712" y="331" style="font-size:11.5px">Avg:Exp</text>
<text x="632" y="555" style="font-size:11.5px">Frequency(Hz)</text>
<text x="55" y="555.3" style="font-size:11.5px">Cursor: 20.00 Hz, 6.29 Ohm</text>
<text x="712" y="477" style="font-size:12.5px">L</text>
<text x="712" y="489" style="font-size:12.5px">I</text>
<text x="712" y="501.5" style="font-size:12.5px">M</text>
<text x="712" y="514" style="font-size:12.5px">P</text>
</svg>
<div id="side" class="a"></div>
<div class="t sm" style="left:774px;top:92px">Max</div>
<div class="a spin" style="left:774px;top:103px;width:13px;height:26px"></div>
<svg class="a" style="left:774px;top:103px" width="13" height="26"><path d="M4 9l2.5-2.5L9 9M4 17l2.5 2.5L9 17" stroke="#4d6185" stroke-width="1.5" fill="none"/></svg>
<div class="a sbtn" style="left:772px;top:143px;width:19px;height:15px">Fit</div>
<div class="t sm" style="left:774px;top:167px">Min</div>
<div class="a spin" style="left:774px;top:178px;width:13px;height:27px"></div>
<svg class="a" style="left:774px;top:178px" width="13" height="27"><path d="M4 9l2.5-2.5L9 9M4 18l2.5 2.5L9 18" stroke="#4d6185" stroke-width="1.5" fill="none"/></svg>
<div class="a sbtn" style="left:772px;top:217px;width:19px;height:15px">Set</div>
<div class="t sm" style="left:770px;top:244.5px">FrHigh</div>
<div class="a spin" style="left:770px;top:259px;width:22px;height:10px"></div>
<svg class="a" style="left:770px;top:259px" width="22" height="10"><path d="M8 2.5L5.5 5L8 7.5M14 2.5L16.5 5L14 7.5" stroke="#4d6185" stroke-width="1.5" fill="none"/></svg>
<div class="t sm" style="left:770px;top:279px">FrLow</div>
<div class="a spin" style="left:770px;top:291px;width:22px;height:11px"></div>
<svg class="a" style="left:770px;top:291px" width="22" height="11"><path d="M8 3L5.5 5.5L8 8M14 3L16.5 5.5L14 8" stroke="#4d6185" stroke-width="1.5" fill="none"/></svg>
<div id="status" class="a"></div>
<div class="t sm" style="left:2px;top:566.5px;font-size:8.6px">Ready</div>
<div class="a" style="left:653px;top:564px;width:1px;height:12px;background:#d6d3c6"></div>
<div class="a" style="left:690px;top:564px;width:1px;height:12px;background:#d6d3c6"></div>
<div class="a" style="left:792px;top:564px;width:1px;height:12px;background:#d6d3c6"></div>
<div class="t sm" style="left:619.5px;top:566.5px;font-size:8.7px">L:-16.6</div>
<div class="t sm" style="left:657px;top:566.5px;font-size:8.7px">R:-6.9</div>
<div class="t sm" style="left:697.5px;top:566.5px;font-size:8.25px">Impedance Measurement</div>
<div id="task" class="a"></div>
<div class="a" style="left:0;top:576px;width:75px;height:24px;border-radius:0 9px 9px 0;background:linear-gradient(#6cc46c 0,#48a848 3px,#3c9c3c 12px,#359235 20px,#2c822c 24px);box-shadow:inset -3px 0 3px #2a7a2a"></div>
<svg class="a" style="left:8px;top:581px" width="15" height="14"><path d="M1 2.5q3-1.5 6 0v4.5q-3-1.5-6 0z" fill="#f0602a"/><path d="M8 2.5q3 1.5 6 0v4.5q-3 1.5-6 0z" fill="#7ac142"/><path d="M1 8q3-1.5 6 0v4.5q-3-1.5-6 0z" fill="#3a8ef0"/><path d="M8 8q3 1.5 6 0v4.5q-3 1.5-6 0z" fill="#f8c41c"/></svg>
<div class="t" style="left:27px;top:581.2px;font-size:13.6px;font-weight:bold;font-style:italic;color:#f4fff0;letter-spacing:0.3px;text-shadow:1px 1px 1px #2a5a2a">Start</div>
<svg class="a" style="left:85px;top:578px" width="70" height="20"><rect x="2.5" y="3" width="10" height="12" rx="3" fill="#e4ecf8" stroke="#8aa8d8" stroke-width="0.8"/><path d="M5 6.5h4.5v5h-4.5z" fill="none" stroke="#2a5ab8" stroke-width="1.3"/>
<path d="M21 16q-1-6 5-10q4-2 6-1" stroke="#c8d040" stroke-width="1.8" fill="none"/><circle cx="27" cy="10.5" r="4" fill="#4aa8f0"/><path d="M24.5 10.5h5" stroke="#d8f0ff" stroke-width="1.2"/>
<circle cx="44" cy="9" r="6" fill="#eef2fa" stroke="#b8c8e0" stroke-width="0.8"/><path d="M41 6l5 5" stroke="#4a5a7a" stroke-width="1.3"/><path d="M46 12l2 3" stroke="#c8d040" stroke-width="1"/>
<text x="58" y="10" style="font-size:10px;fill:#c0d4f8">»</text></svg>
<div class="a tbtn" style="left:157px;top:579px;width:124px"></div>
<div class="a tbtn" style="left:283px;top:579px;width:121px"></div>
<div class="a" style="left:407px;top:579px;width:124px;height:21px;border-radius:3px;background:#1e4ab8;box-shadow:inset 1px 1px 2px #16348a"></div>
<svg class="a" style="left:164px;top:582px" width="13" height="13"><rect x="0" y="0" width="12" height="12" fill="#e4ded8" stroke="#9a9aa8" stroke-width="0.6"/><path d="M1 10l4-4l3 2l3 2v1.5h-10z" fill="#d8342a"/></svg>
<svg class="a" style="left:289px;top:582px" width="13" height="13"><rect x="0" y="0" width="12" height="12" fill="#f0f0f0" stroke="#a0a0a0" stroke-width="0.6"/><circle cx="6.5" cy="6.5" r="4.3" fill="none" stroke="#d82020" stroke-width="2.4"/></svg>
<svg class="a" style="left:415px;top:582px" width="13" height="13"><rect x="0" y="0" width="12" height="12" fill="#ccc8c0" stroke="#8a8a90" stroke-width="0.6"/><path d="M3.5 9.5l2.5-6l2.5 6z" fill="none" stroke="#333" stroke-width="1"/></svg>
<div class="t tk" style="left:179px;top:585px">Untitled - Steps</div>
<div class="t tk" style="left:304px;top:585px">Untitled - Arta</div>
<div class="t tk" style="left:430px;top:585px">Untitled - Limp</div>
<div class="a" style="left:755px;top:576px;width:45px;height:24px;background:linear-gradient(#1ea6f4 0,#0c96ea 4px,#0a8fe4 18px,#0a86d8 23px);border-left:1px solid #0a5ac0"></div>
<div class="a" style="left:749px;top:580px;width:13px;height:14px;border-radius:50%;background:radial-gradient(circle at 40% 35%,#c8e0fc,#4a8ae8 70%,#2a6ad8)"></div>
<svg class="a" style="left:749px;top:580px" width="13" height="14"><path d="M7.5 4L5 7l2.5 3" stroke="#fff" stroke-width="1.6" fill="none"/></svg>
<div class="t tk" style="left:768px;top:585px">15:24</div>
<div id="dlg" class="a">
<div class="a" style="left:0;top:0;width:368px;height:23px;border-radius:7px 7px 0 0;background:linear-gradient(#3d8cf8 0,#1a66f4 2px,#0a5cf2 5px,#0657ee 12px,#0a55e6 18px,#0b4fd8 21px,#0a48c8 23px)"></div>
<div class="t" style="left:6px;top:8px;color:#fff;font-weight:bold;font-size:10.4px;transform:scaleX(0.95);transform-origin:0 0;text-shadow:1px 1px 0 #0a2fa0">Loudspeaker Parameters - Closed Box Method</div>
<div class="a" style="left:348px;top:4px;width:17px;height:17px;border:1px solid #fff;border-radius:3px;background:linear-gradient(135deg,#f08a6a,#e0502a 50%,#c83c18)"></div>
<svg class="a" style="left:348px;top:4px" width="17" height="17"><path d="M5 5L12 12M12 5L5 12" stroke="#fff" stroke-width="1.8"/></svg>
<div class="a" style="left:3px;top:23px;width:362px;height:259px;background:#ece9d8;border-top:1px solid #fcfbf6;border-left:1px solid #f8f7f0"></div><div class="a" style="left:0;top:282px;width:368px;height:3px;background:#0a2a8c"></div>
<div class="a" style="left:10px;top:31px;width:155px;height:246px;background:#fff;border:1px solid #a0a0a0"></div><div class="a" style="left:151px;top:32px;width:13px;height:244px;background:#fbfbf9"></div><div class="a" style="left:151px;top:33px;width:11px;height:13px;background:#f6f6f2;border:1px solid #e4e4dc;border-radius:1px"></div><div class="a" style="left:151px;top:263px;width:11px;height:13px;background:#f6f6f2;border:1px solid #e4e4dc;border-radius:1px"></div><svg class="a" style="left:151px;top:32px" width="13" height="245"><path d="M3 9.5L6.5 6L10 9.5M3 236L6.5 239.5L10 236" fill="none" stroke="#b8b8b0" stroke-width="2"/></svg><div class="t dl" style="left:14px;top:34.8px">Fs  = 48.20 Hz</div><div class="t dl" style="left:14px;top:45.0px">Re  = 5.00 ohms[dc]</div><div class="t dl" style="left:14px;top:55.1px">Le  = 258.28 uH</div><div class="t dl" style="left:14px;top:65.3px">L2  = 619.74 uH</div><div class="t dl" style="left:14px;top:75.5px">R2  = 11.58 ohms</div><div class="t dl" style="left:14px;top:85.7px">Qt  = 0.43</div><div class="t dl" style="left:14px;top:95.8px">Qes = 0.48</div><div class="t dl" style="left:14px;top:106.0px">Qms = 4.41</div><div class="t dl" style="left:14px;top:116.2px">Mms = 8.21 grams</div><div class="t dl" style="left:14px;top:126.3px">Rms = 0.564736 kg/s</div><div class="t dl" style="left:14px;top:136.5px">Cms = 0.001327 m/N</div><div class="t dl" style="left:14px;top:146.7px">Vas = 23.84 liters</div><div class="t dl" style="left:14px;top:156.8px">Sd= 113.10 cm^2</div><div class="t dl" style="left:14px;top:167.0px">Bl  = 5.091723 Tm</div><div class="t dl" style="left:14px;top:177.2px">ETA = 0.54 %</div><div class="t dl" style="left:14px;top:187.4px">Lp(2.83V/1m) = 91.43 dB</div><div class="t dl" style="left:14px;top:207.7px">Closed Box Method:</div><div class="t dl" style="left:14px;top:217.9px">Box volume = 21.00 liters</div><div class="t dl" style="left:14px;top:228.0px">Diameter= 12.00 cm</div>
<div class="a" style="left:181px;top:36px;width:176px;height:106px;border:1px solid #d0d0bf;border-radius:3px"></div><div class="t dl" style="left:185px;top:32px;padding:0 2px;background:#ece9d8;color:#1a50b8">User Input</div><div class="t dl" style="left:192px;top:56.0px;font-size:8.25px">Voice coil Resistance (ohms)</div><div class="t dl" style="left:192px;top:85.0px;font-size:8.25px">Membrane diameter (cm)</div><div class="t dl" style="left:192px;top:114.0px;font-size:8.25px">Closed box volume (lit)</div><div class="a" style="left:304px;top:53px;width:40px;height:16px;background:#fff;border:1px solid #a5acb5"></div><div class="t dl" style="left:308px;top:56px">5,94</div><div class="a" style="left:304px;top:79px;width:38px;height:17px;background:#fff;border:1px solid #a5acb5"></div><div class="t dl" style="left:308px;top:82px">12</div><div class="a" style="left:305px;top:109px;width:38px;height:18px;background:#fff;border:1px solid #a5acb5"></div><div class="t dl" style="left:309px;top:112px">21</div><div class="a btn" style="left:188px;top:205px;width:84px;height:19px;border-color:#3c5fa8;box-shadow:inset 0 0 0 1px #98b8ea,inset 0 -1px 0 1px #7aa0e0;line-height:17px">Calculate TSP</div><div class="a btn" style="left:188px;top:231px;width:84px;height:18px;border-color:#5a6470;box-shadow:inset 0 -2px 0 #d8d4c8;line-height:16px">Export in .CSV file</div><div class="a btn" style="left:188px;top:258px;width:85px;height:18px;border-color:#5a6470;box-shadow:inset 0 -2px 0 #d8d4c8;line-height:16px">Copy to Clipboard</div><div class="a btn" style="left:300px;top:231px;width:58px;height:18px;border-color:#5a6470;box-shadow:inset 0 -2px 0 #d8d4c8;line-height:16px">Cancel</div><div class="a btn" style="left:300px;top:258px;width:58px;height:18px;border-color:#5a6470;box-shadow:inset 0 -2px 0 #d8d4c8;line-height:16px">OK</div>
</div>
</body></html>
